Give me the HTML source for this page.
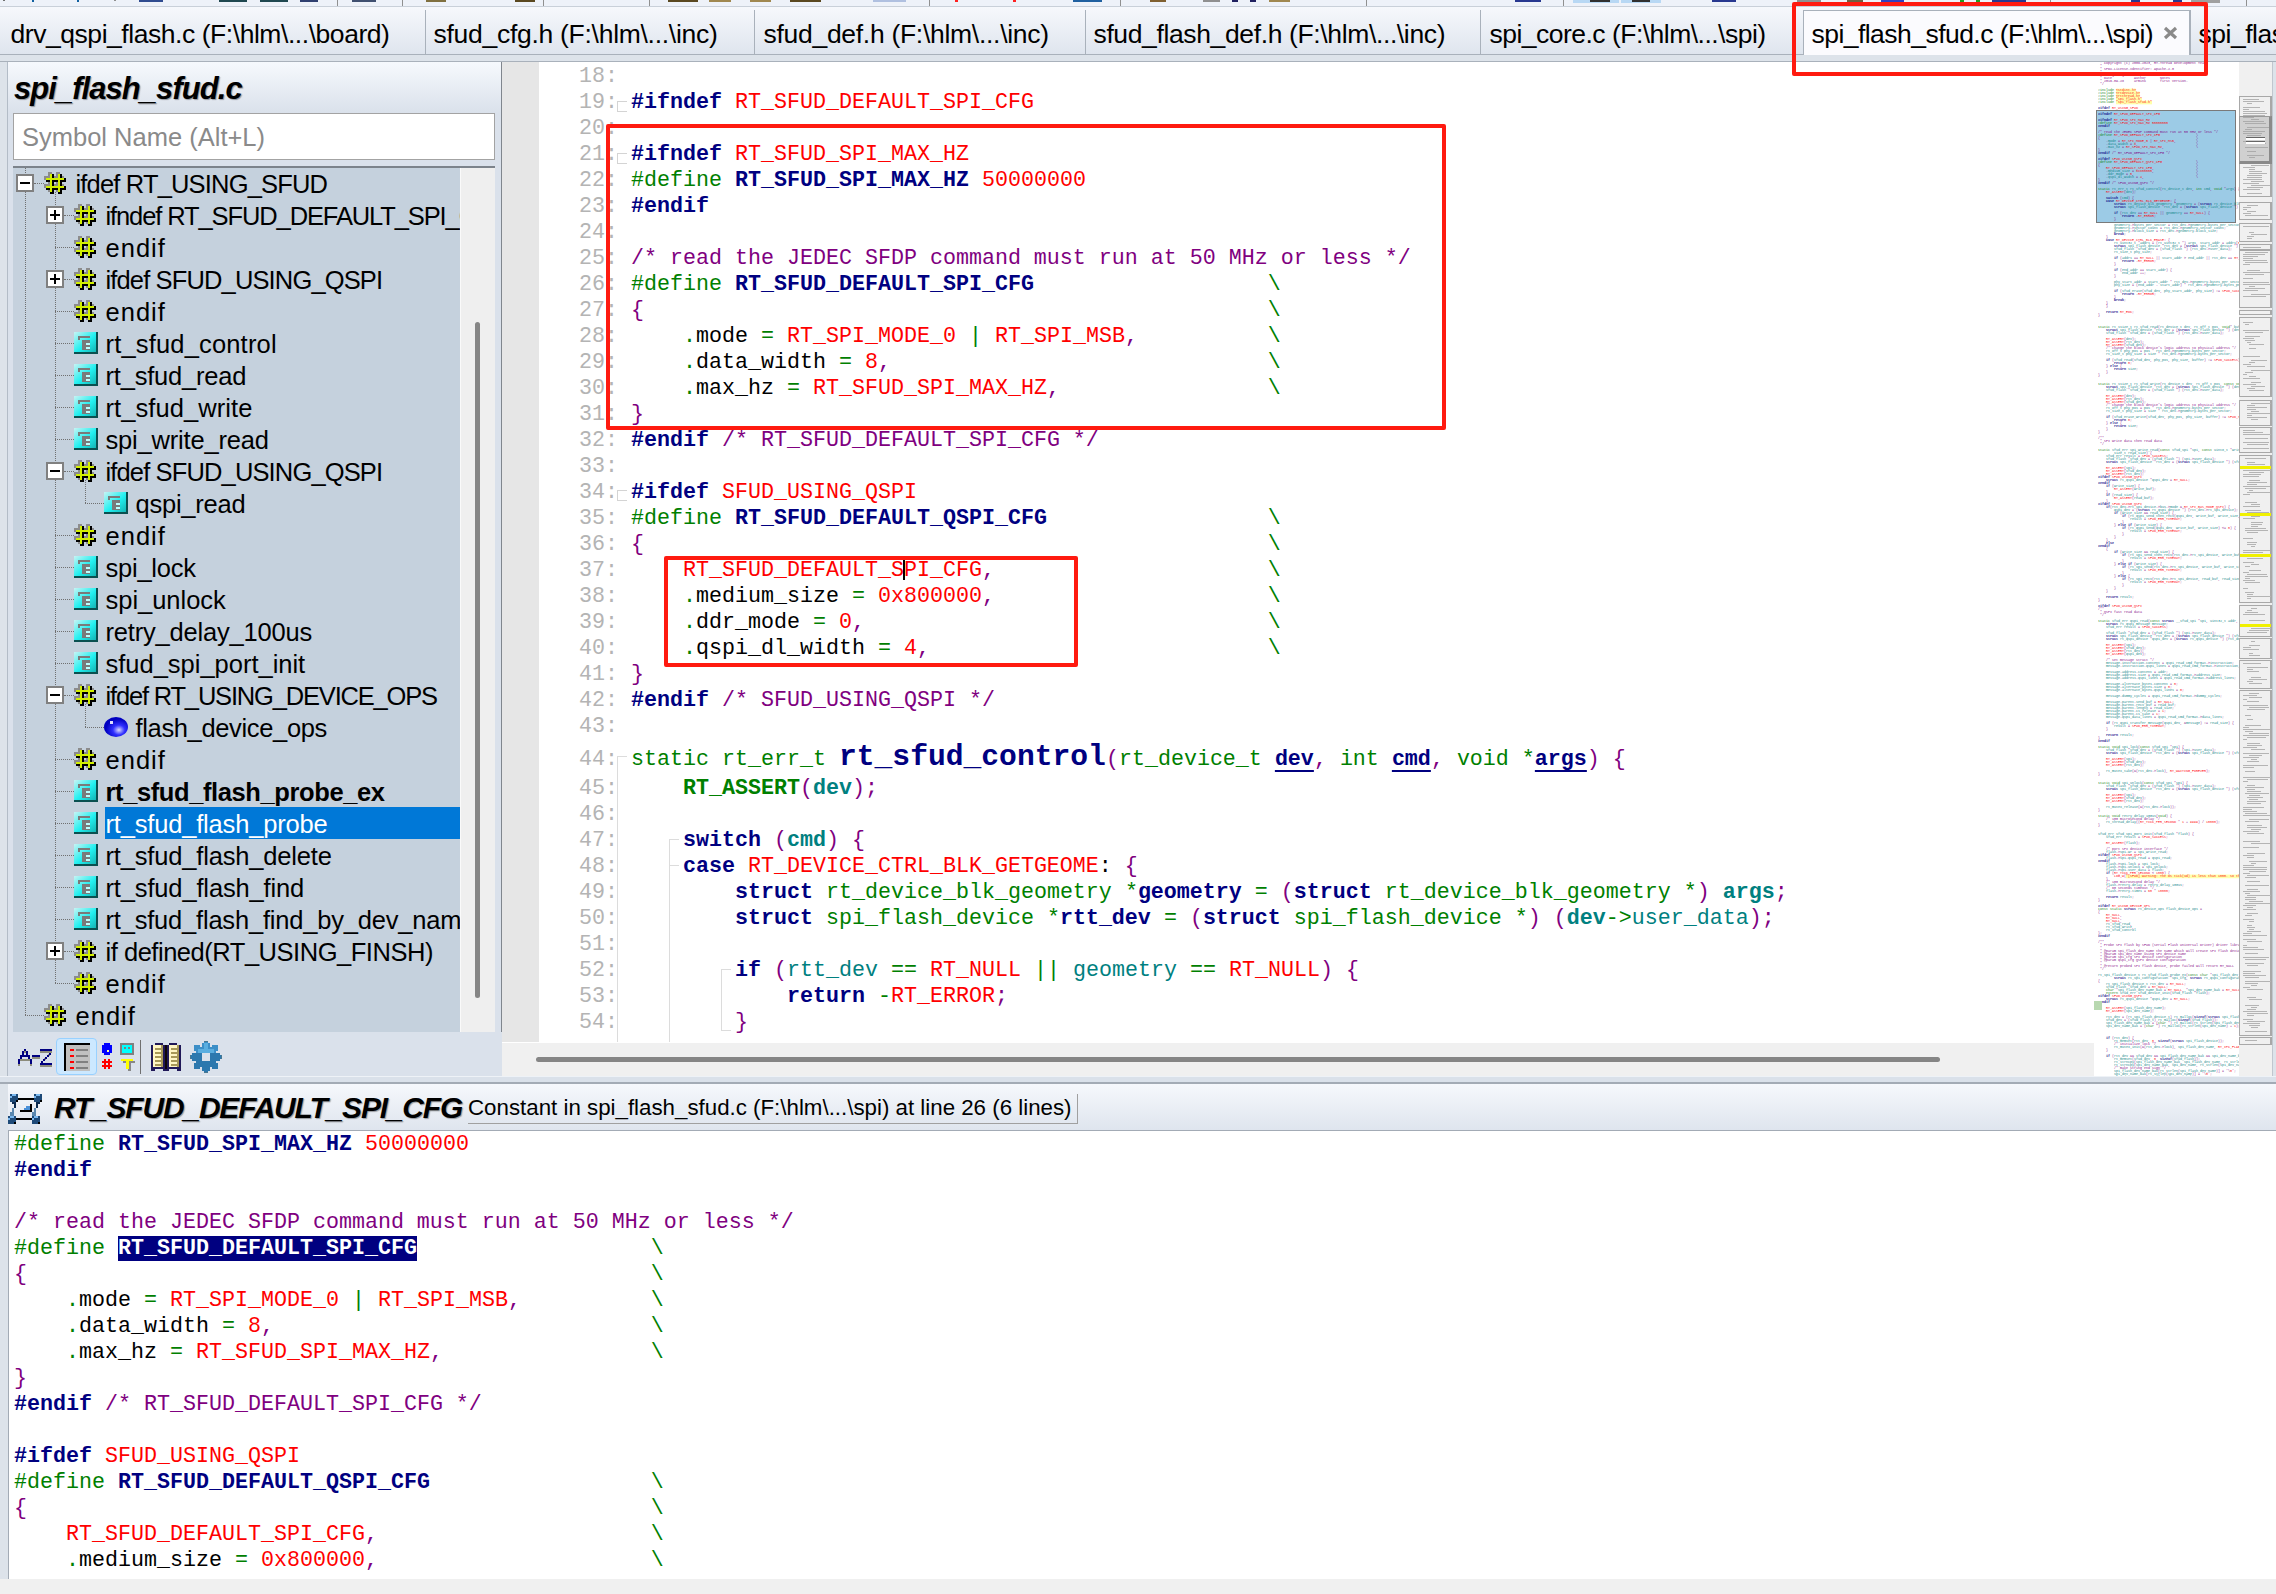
<!DOCTYPE html>
<html><head><meta charset="utf-8">
<style>
*{margin:0;padding:0;box-sizing:border-box}
html,body{width:2276px;height:1594px;overflow:hidden;background:#dde3ea;font-family:"Liberation Sans",sans-serif}
.a{position:absolute}
/* top toolbar strip */
#tb{left:0;top:0;width:2276px;height:7px;background:#eef2f9;border-bottom:1px solid #c9d0d9}
#tabbar{left:0;top:7px;width:2276px;height:48px;background:linear-gradient(#f6f8fc,#dfe5ee);border-bottom:1px solid #a9b1bb}
.tab{position:absolute;top:19px;font-size:26.5px;line-height:30px;color:#000;white-space:nowrap}
.tsep{position:absolute;top:10px;width:1px;height:44px;background:#a9b1bb}
#acttab{left:1803px;top:10px;width:387px;height:45px;background:#fbfbfe;border:1px solid #a9b1bb;border-bottom:none}
#strip{left:0;top:55px;width:2276px;height:7px;background:#dde3ea;border-bottom:1px solid #a9b1bb}
/* left panel */
#lp{left:7px;top:62px;width:495px;height:976px;background:#dae1eb;border-left:1px solid #b3bcc7;border-right:1px solid #80868e}
#lphead{left:8px;top:62px;width:493px;height:51px;background:linear-gradient(#f6f9fd,#dae1eb)}
#title{left:14px;top:71px;font-size:31px;font-weight:bold;font-style:italic;letter-spacing:-0.95px;line-height:36px;color:#000;white-space:nowrap;text-shadow:1px 1px 1px rgba(0,0,0,0.35)}
#search{left:13px;top:113px;width:482px;height:47px;background:#fff;border:1px solid #a3a3a3}
#search span{position:absolute;left:8px;top:8px;font-size:25.5px;line-height:30px;color:#8a8a8a;white-space:nowrap}
#tree{left:13px;top:166px;width:482px;height:866px;background:#c5d1dd;border-top:2px solid #7c838b;overflow:hidden}
#vtrack{left:460px;top:168px;width:35px;height:864px;background:#efefef;border-left:1px solid #fafafa}
#vthumb{left:475px;top:322px;width:5px;height:676px;background:#858585;border-radius:3px}
.tt{position:absolute;font-size:25.5px;line-height:32px;color:#000;white-space:nowrap}
.tb_{font-weight:bold}
.ts{color:#fff}
.sel{position:absolute;height:32px;background:#0078d7}
.ico{position:absolute}
.exp{position:absolute;width:18px;height:18px;background:#fff;border:2px solid #808080}
.exp .mh{position:absolute;left:2px;top:6px;width:10px;height:2px;background:#000}
.exp .mv{position:absolute;left:6px;top:2px;width:2px;height:10px;background:#000}
.hd{position:absolute;height:1px;border-top:1px dotted #707070}
.vd{position:absolute;width:1px;border-left:1px dotted #707070}
#treeclip{left:13px;top:168px;width:447px;height:864px;overflow:hidden}
/* bottom toolbar of left panel */
#ltools{left:7px;top:1032px;width:495px;height:44px;background:#dae1eb;border-left:1px solid #b3bcc7}
/* editor */
#gutter{left:502px;top:62px;width:37px;height:980px;background:#e6e6e6}
#code{left:539px;top:62px;width:1555px;height:980px;background:#fff;overflow:hidden}
.ln{position:absolute;left:579px;width:52px;font-family:"Liberation Mono",monospace;font-size:21.667px;line-height:26px;color:#b4b4b4;white-space:pre}
.cl{position:absolute;left:631px;font-family:"Liberation Mono",monospace;font-size:21.667px;line-height:26px;color:#000;white-space:pre}
.cl b{font-weight:normal}
.n{color:#000080;font-weight:bold!important}
.g{color:#008000}
.gb{color:#008000;font-weight:bold!important}
.r{color:#ff0000}
.p{color:#800080}
.t{color:#008080}
.tb{color:#008080;font-weight:bold!important}
.k{color:#000}
.u{color:#000080;font-weight:bold!important;text-decoration:underline;text-underline-offset:5px;text-decoration-thickness:1.5px}
.big{color:#000080;font-weight:bold!important;font-size:29.67px;line-height:20px}
.hl{color:#fff;background:#000080;font-weight:bold!important}
.cur{display:inline-block;width:0;height:22px;border-left:2px solid #000;vertical-align:-4px;margin-left:-1px;margin-right:-1px}
.bc{left:14px}
#hscroll{left:502px;top:1042px;width:1592px;height:34px;background:#f0f0f0;border-top:1px solid #fff}
#hthumb{left:536px;top:1057px;width:1404px;height:5px;background:#858585;border-radius:3px}
/* minimap */
#mm{left:2094px;top:62px;width:145px;height:1014px;background:#fff;overflow:hidden}
#ov{left:2239px;top:62px;width:33px;height:1014px;background:#f0f0f0;overflow:hidden}
#rstrip{left:2272px;top:62px;width:4px;height:1014px;background:#dde3ea;border-left:1px solid #c0c6ce}
/* band + bottom */
#band{left:0;top:1076px;width:2276px;height:8px;background:#dae1ea;border-top:1px solid #eef2f7;border-bottom:2px solid #a3abb5}
#bhead{left:0;top:1084px;width:2276px;height:47px;background:linear-gradient(#f6f8fc,#dfe5ee);border-bottom:1px solid #a3abb5}
#btitle{left:54px;top:1090px;font-size:30px;font-weight:bold;font-style:italic;letter-spacing:-1.2px;line-height:36px;color:#000;white-space:nowrap;text-shadow:1px 1px 1px rgba(0,0,0,0.35)}
#bdesc{left:468px;top:1094px;width:610px;height:30px;border-right:1px solid #a0a0a0;border-bottom:1px solid #a0a0a0}
#bdesc span{position:absolute;left:0;top:0px;font-size:22.3px;line-height:28px;white-space:nowrap;color:#000}
#bcode{left:8px;top:1131px;width:2268px;height:448px;background:#fff;border-left:1px solid #a3abb5}
#bleft{left:0;top:1084px;width:8px;height:495px;background:#dde3ea}
#bbot{left:0;top:1579px;width:2276px;height:15px;background:#f0f0f0}
.redbox{position:absolute;border:4px solid #ff1a10;border-radius:2px}

.mmtext{opacity:0.9;position:absolute;left:4px;top:-3px;width:600px;font-family:"Liberation Mono",monospace;font-size:10px;line-height:9px;white-space:pre;color:#000;transform:scale(0.3333);transform-origin:0 0}
.mmtext b{font-weight:normal}
.ys{background:#ffffa0}
.mmhl{position:absolute;left:2px;top:48px;width:140px;height:113px;background:#9ccbe6;border:1px solid #7a7a7a}
.ovb{position:absolute;left:0;width:33px;border:1px solid #a8a8a8;border-right-width:2px}
.ovl{position:absolute;height:1px;background:#b4b4b4}
.ovy{position:absolute;left:1px;width:31px;height:3px;background:#f0f000}
.ovthumb{position:absolute;left:0;top:54px;width:33px;height:48px;background:rgba(160,160,160,0.4);border:1px solid #9a9a9a;border-right:3px solid #8a8a8a;border-bottom:3px solid #8a8a8a}
.ovh{position:absolute;left:7px;width:19px;height:3px;background:#fff;border-top:1px solid #666}
.fbk{position:absolute;width:10px;border:1px solid #d4d4d4;border-right:none}
.fln{position:absolute;width:1px;background:#dcdcdc}
.flh{position:absolute;width:10px;height:1px;background:#dcdcdc}
</style></head><body>
<div id="tb" class="a"></div>
<div class="a" style="left:3px;top:0;width:2px;height:1px;background:#707070"></div><div class="a" style="left:114px;top:0;width:2px;height:1px;background:#909090"></div><div class="a" style="left:32px;top:0;width:2px;height:2px;background:#1060a0"></div><div class="a" style="left:77px;top:0;width:2px;height:2px;background:#1060a0"></div><div class="a" style="left:139px;top:0;width:24px;height:2px;background:#304c90"></div><div class="a" style="left:219px;top:0;width:28px;height:2px;background:#204850"></div><div class="a" style="left:260px;top:0;width:28px;height:2px;background:#204850"></div><div class="a" style="left:300px;top:0;width:18px;height:2px;background:#304070"></div><div class="a" style="left:337px;top:0;width:1px;height:6px;background:#909090"></div><div class="a" style="left:352px;top:0;width:24px;height:2px;background:#405070"></div><div class="a" style="left:402px;top:0;width:1px;height:6px;background:#909090"></div><div class="a" style="left:426px;top:0;width:20px;height:2px;background:#807040"></div><div class="a" style="left:515px;top:0;width:20px;height:2px;background:#5a4820"></div><div class="a" style="left:543px;top:0;width:1px;height:6px;background:#909090"></div><div class="a" style="left:649px;top:0;width:1px;height:6px;background:#909090"></div><div class="a" style="left:668px;top:0;width:30px;height:2px;background:#5a4820"></div><div class="a" style="left:709px;top:0;width:22px;height:2px;background:#a08850"></div><div class="a" style="left:750px;top:0;width:21px;height:2px;background:#a08850"></div><div class="a" style="left:790px;top:0;width:31px;height:2px;background:#5a4820"></div><div class="a" style="left:873px;top:0;width:33px;height:2px;background:#b0c0e0"></div><div class="a" style="left:929px;top:0;width:1px;height:6px;background:#909090"></div><div class="a" style="left:955px;top:0;width:3px;height:2px;background:#ff2020"></div><div class="a" style="left:1013px;top:0;width:3px;height:2px;background:#ff2020"></div><div class="a" style="left:1073px;top:0;width:29px;height:2px;background:#2060a0"></div><div class="a" style="left:1120px;top:0;width:1px;height:6px;background:#909090"></div><div class="a" style="left:1150px;top:0;width:16px;height:2px;background:#806030"></div><div class="a" style="left:1203px;top:0;width:17px;height:2px;background:#909090"></div><div class="a" style="left:1232px;top:0;width:6px;height:2px;background:#202060"></div><div class="a" style="left:1250px;top:0;width:6px;height:2px;background:#202060"></div><div class="a" style="left:1269px;top:0;width:21px;height:2px;background:#a08850"></div><div class="a" style="left:1366px;top:0;width:1px;height:6px;background:#909090"></div><div class="a" style="left:1515px;top:0;width:26px;height:2px;background:#283890"></div><div class="a" style="left:1563px;top:0;width:1px;height:6px;background:#909090"></div><div class="a" style="left:1573px;top:0;width:46px;height:3px;background:#b8d8f4"></div><div class="a" style="left:1621px;top:0;width:40px;height:3px;background:#b8d8f4"></div><div class="a" style="left:1590px;top:0;width:20px;height:2px;background:#303030"></div><div class="a" style="left:1632px;top:0;width:18px;height:2px;background:#303030"></div><div class="a" style="left:1712px;top:0;width:24px;height:2px;background:#283890"></div><div class="a" style="left:1797px;top:0;width:24px;height:2px;background:#909090"></div><div class="a" style="left:1847px;top:0;width:16px;height:2px;background:#706040"></div><div class="a" style="left:1881px;top:0;width:23px;height:2px;background:#3040c0"></div><div class="a" style="left:1960px;top:0;width:4px;height:2px;background:#20a020"></div><div class="a" style="left:1976px;top:0;width:4px;height:2px;background:#20a020"></div><div class="a" style="left:1992px;top:0;width:34px;height:2px;background:#283890"></div><div class="a" style="left:2050px;top:0;width:1px;height:6px;background:#909090"></div><div class="a" style="left:2131px;top:0;width:9px;height:2px;background:#283890"></div><div class="a" style="left:2173px;top:0;width:9px;height:2px;background:#283890"></div><div class="a" style="left:2191px;top:0;width:29px;height:3px;background:#a0a0a0"></div><div class="a" style="left:2246px;top:0;width:1px;height:6px;background:#909090"></div>
<div id="tabbar" class="a"></div>
<div id="acttab" class="a"></div>
<div class="tab" style="left:10.5px;letter-spacing:-0.45px">drv_qspi_flash.c (F:\hlm\...\board)</div>
<div class="tsep" style="left:425px"></div>
<div class="tab" style="left:433.5px;letter-spacing:-0.28px">sfud_cfg.h (F:\hlm\...\inc)</div>
<div class="tsep" style="left:754px"></div>
<div class="tab" style="left:763.5px;letter-spacing:-0.29px">sfud_def.h (F:\hlm\...\inc)</div>
<div class="tsep" style="left:1085px"></div>
<div class="tab" style="left:1093.5px;letter-spacing:-0.37px">sfud_flash_def.h (F:\hlm\...\inc)</div>
<div class="tsep" style="left:1480px"></div>
<div class="tab" style="left:1489.5px;letter-spacing:-0.52px">spi_core.c (F:\hlm\...\spi)</div>
<div class="tab" style="left:1811.5px;letter-spacing:-0.54px">spi_flash_sfud.c (F:\hlm\...\spi)</div>
<div class="tab" style="left:2198.5px;letter-spacing:-0.49px">spi_flash_sfud.h</div>
<svg class="a" style="left:2163px;top:26px" width="15" height="14" viewBox="0 0 15 14"><path d="M2 2L13 12M13 2L2 12" stroke="#8a8a8a" stroke-width="3.2"/></svg>
<div class="tsep" style="left:2190px"></div>
<div id="strip" class="a"></div>

<div id="lp" class="a"></div>
<div id="lphead" class="a"></div>
<div id="title" class="a">spi_flash_sfud.c</div>
<div id="search" class="a"><span>Symbol Name (Alt+L)</span></div>
<div id="tree" class="a"></div>
<div id="vtrack" class="a"></div>
<div id="vthumb" class="a"></div>
<div id="treeclip" class="a"><div style="position:absolute;left:-13px;top:-168px;width:2276px;height:1594px">
<div class="vd" style="left:25px;top:166px;height:849px"></div>
<div class="vd" style="left:55px;top:192px;height:791px"></div>
<div class="vd" style="left:85px;top:480px;height:23px"></div>
<div class="vd" style="left:85px;top:704px;height:23px"></div>
<div class="hd" style="left:34px;top:183px;width:10px"></div>
<div class="exp" style="left:16px;top:174px"><i class="mh"></i></div>
<svg class="ico" style="left:44px;top:172px" width="22" height="22" viewBox="0 0 22 22" shape-rendering="crispEdges"><g fill="#8c8c8c"><rect x="4" y="0" width="4" height="20"/><rect x="12" y="0" width="4" height="20"/><rect x="0" y="4" width="20" height="4"/><rect x="0" y="12" width="20" height="4"/></g><g fill="#000"><rect x="6" y="2" width="4" height="20"/><rect x="14" y="2" width="4" height="20"/><rect x="2" y="6" width="20" height="4"/><rect x="2" y="14" width="20" height="4"/></g><g fill="#d2f000"><rect x="6" y="2" width="2" height="18"/><rect x="14" y="2" width="2" height="18"/><rect x="2" y="6" width="18" height="2"/><rect x="2" y="14" width="18" height="2"/></g></svg>
<div class="tt" style="left:75.5px;top:168px;letter-spacing:-0.83px">ifdef RT_USING_SFUD</div>
<div class="hd" style="left:55px;top:215px;width:19px"></div>
<div class="hd" style="left:64px;top:215px;width:10px"></div>
<div class="exp" style="left:46px;top:206px"><i class="mh"></i><i class="mv"></i></div>
<svg class="ico" style="left:74px;top:204px" width="22" height="22" viewBox="0 0 22 22" shape-rendering="crispEdges"><g fill="#8c8c8c"><rect x="4" y="0" width="4" height="20"/><rect x="12" y="0" width="4" height="20"/><rect x="0" y="4" width="20" height="4"/><rect x="0" y="12" width="20" height="4"/></g><g fill="#000"><rect x="6" y="2" width="4" height="20"/><rect x="14" y="2" width="4" height="20"/><rect x="2" y="6" width="20" height="4"/><rect x="2" y="14" width="20" height="4"/></g><g fill="#d2f000"><rect x="6" y="2" width="2" height="18"/><rect x="14" y="2" width="2" height="18"/><rect x="2" y="6" width="18" height="2"/><rect x="2" y="14" width="18" height="2"/></g></svg>
<div class="tt" style="left:105.5px;top:200px;letter-spacing:-1.11px">ifndef RT_SFUD_DEFAULT_SPI_CFG</div>
<div class="hd" style="left:55px;top:247px;width:19px"></div>
<svg class="ico" style="left:74px;top:236px" width="22" height="22" viewBox="0 0 22 22" shape-rendering="crispEdges"><g fill="#8c8c8c"><rect x="4" y="0" width="4" height="20"/><rect x="12" y="0" width="4" height="20"/><rect x="0" y="4" width="20" height="4"/><rect x="0" y="12" width="20" height="4"/></g><g fill="#000"><rect x="6" y="2" width="4" height="20"/><rect x="14" y="2" width="4" height="20"/><rect x="2" y="6" width="20" height="4"/><rect x="2" y="14" width="20" height="4"/></g><g fill="#d2f000"><rect x="6" y="2" width="2" height="18"/><rect x="14" y="2" width="2" height="18"/><rect x="2" y="6" width="18" height="2"/><rect x="2" y="14" width="18" height="2"/></g></svg>
<div class="tt" style="left:105.5px;top:232px;letter-spacing:1.02px">endif</div>
<div class="hd" style="left:55px;top:279px;width:19px"></div>
<div class="hd" style="left:64px;top:279px;width:10px"></div>
<div class="exp" style="left:46px;top:270px"><i class="mh"></i><i class="mv"></i></div>
<svg class="ico" style="left:74px;top:268px" width="22" height="22" viewBox="0 0 22 22" shape-rendering="crispEdges"><g fill="#8c8c8c"><rect x="4" y="0" width="4" height="20"/><rect x="12" y="0" width="4" height="20"/><rect x="0" y="4" width="20" height="4"/><rect x="0" y="12" width="20" height="4"/></g><g fill="#000"><rect x="6" y="2" width="4" height="20"/><rect x="14" y="2" width="4" height="20"/><rect x="2" y="6" width="20" height="4"/><rect x="2" y="14" width="20" height="4"/></g><g fill="#d2f000"><rect x="6" y="2" width="2" height="18"/><rect x="14" y="2" width="2" height="18"/><rect x="2" y="6" width="18" height="2"/><rect x="2" y="14" width="18" height="2"/></g></svg>
<div class="tt" style="left:105.5px;top:264px;letter-spacing:-0.86px">ifdef SFUD_USING_QSPI</div>
<div class="hd" style="left:55px;top:311px;width:19px"></div>
<svg class="ico" style="left:74px;top:300px" width="22" height="22" viewBox="0 0 22 22" shape-rendering="crispEdges"><g fill="#8c8c8c"><rect x="4" y="0" width="4" height="20"/><rect x="12" y="0" width="4" height="20"/><rect x="0" y="4" width="20" height="4"/><rect x="0" y="12" width="20" height="4"/></g><g fill="#000"><rect x="6" y="2" width="4" height="20"/><rect x="14" y="2" width="4" height="20"/><rect x="2" y="6" width="20" height="4"/><rect x="2" y="14" width="20" height="4"/></g><g fill="#d2f000"><rect x="6" y="2" width="2" height="18"/><rect x="14" y="2" width="2" height="18"/><rect x="2" y="6" width="18" height="2"/><rect x="2" y="14" width="18" height="2"/></g></svg>
<div class="tt" style="left:105.5px;top:296px;letter-spacing:1.02px">endif</div>
<div class="hd" style="left:55px;top:343px;width:19px"></div>
<svg class="ico" style="left:74px;top:332px" width="24" height="22" viewBox="0 0 24 22"><defs><linearGradient id="fg1" x1="0" y1="0" x2="1" y2="1"><stop offset="0" stop-color="#c8f4f4"/><stop offset="0.5" stop-color="#22f0f0"/><stop offset="1" stop-color="#10a8a8"/></linearGradient></defs><rect x="0" y="0" width="24" height="22" fill="url(#fg1)"/><rect x="22" y="0" width="2" height="22" fill="#0a5050"/><rect x="0" y="20" width="24" height="2" fill="#0a5050"/><g fill="#7a7a7a"><rect x="4" y="4" width="12" height="2"/><rect x="4" y="4" width="2" height="4"/><rect x="8" y="8" width="8" height="10"/></g><g fill="#b8ffff"><rect x="12" y="11" width="4" height="2"/><rect x="12" y="15" width="4" height="2"/></g></svg>
<div class="tt" style="left:105.5px;top:328px;letter-spacing:0.17px">rt_sfud_control</div>
<div class="hd" style="left:55px;top:375px;width:19px"></div>
<svg class="ico" style="left:74px;top:364px" width="24" height="22" viewBox="0 0 24 22"><defs><linearGradient id="fg2" x1="0" y1="0" x2="1" y2="1"><stop offset="0" stop-color="#c8f4f4"/><stop offset="0.5" stop-color="#22f0f0"/><stop offset="1" stop-color="#10a8a8"/></linearGradient></defs><rect x="0" y="0" width="24" height="22" fill="url(#fg2)"/><rect x="22" y="0" width="2" height="22" fill="#0a5050"/><rect x="0" y="20" width="24" height="2" fill="#0a5050"/><g fill="#7a7a7a"><rect x="4" y="4" width="12" height="2"/><rect x="4" y="4" width="2" height="4"/><rect x="8" y="8" width="8" height="10"/></g><g fill="#b8ffff"><rect x="12" y="11" width="4" height="2"/><rect x="12" y="15" width="4" height="2"/></g></svg>
<div class="tt" style="left:105.5px;top:360px;letter-spacing:-0.21px">rt_sfud_read</div>
<div class="hd" style="left:55px;top:407px;width:19px"></div>
<svg class="ico" style="left:74px;top:396px" width="24" height="22" viewBox="0 0 24 22"><defs><linearGradient id="fg3" x1="0" y1="0" x2="1" y2="1"><stop offset="0" stop-color="#c8f4f4"/><stop offset="0.5" stop-color="#22f0f0"/><stop offset="1" stop-color="#10a8a8"/></linearGradient></defs><rect x="0" y="0" width="24" height="22" fill="url(#fg3)"/><rect x="22" y="0" width="2" height="22" fill="#0a5050"/><rect x="0" y="20" width="24" height="2" fill="#0a5050"/><g fill="#7a7a7a"><rect x="4" y="4" width="12" height="2"/><rect x="4" y="4" width="2" height="4"/><rect x="8" y="8" width="8" height="10"/></g><g fill="#b8ffff"><rect x="12" y="11" width="4" height="2"/><rect x="12" y="15" width="4" height="2"/></g></svg>
<div class="tt" style="left:105.5px;top:392px;letter-spacing:0.08px">rt_sfud_write</div>
<div class="hd" style="left:55px;top:439px;width:19px"></div>
<svg class="ico" style="left:74px;top:428px" width="24" height="22" viewBox="0 0 24 22"><defs><linearGradient id="fg4" x1="0" y1="0" x2="1" y2="1"><stop offset="0" stop-color="#c8f4f4"/><stop offset="0.5" stop-color="#22f0f0"/><stop offset="1" stop-color="#10a8a8"/></linearGradient></defs><rect x="0" y="0" width="24" height="22" fill="url(#fg4)"/><rect x="22" y="0" width="2" height="22" fill="#0a5050"/><rect x="0" y="20" width="24" height="2" fill="#0a5050"/><g fill="#7a7a7a"><rect x="4" y="4" width="12" height="2"/><rect x="4" y="4" width="2" height="4"/><rect x="8" y="8" width="8" height="10"/></g><g fill="#b8ffff"><rect x="12" y="11" width="4" height="2"/><rect x="12" y="15" width="4" height="2"/></g></svg>
<div class="tt" style="left:105.5px;top:424px;letter-spacing:-0.19px">spi_write_read</div>
<div class="hd" style="left:55px;top:471px;width:19px"></div>
<div class="hd" style="left:64px;top:471px;width:10px"></div>
<div class="exp" style="left:46px;top:462px"><i class="mh"></i></div>
<svg class="ico" style="left:74px;top:460px" width="22" height="22" viewBox="0 0 22 22" shape-rendering="crispEdges"><g fill="#8c8c8c"><rect x="4" y="0" width="4" height="20"/><rect x="12" y="0" width="4" height="20"/><rect x="0" y="4" width="20" height="4"/><rect x="0" y="12" width="20" height="4"/></g><g fill="#000"><rect x="6" y="2" width="4" height="20"/><rect x="14" y="2" width="4" height="20"/><rect x="2" y="6" width="20" height="4"/><rect x="2" y="14" width="20" height="4"/></g><g fill="#d2f000"><rect x="6" y="2" width="2" height="18"/><rect x="14" y="2" width="2" height="18"/><rect x="2" y="6" width="18" height="2"/><rect x="2" y="14" width="18" height="2"/></g></svg>
<div class="tt" style="left:105.5px;top:456px;letter-spacing:-0.86px">ifdef SFUD_USING_QSPI</div>
<div class="hd" style="left:85px;top:503px;width:19px"></div>
<svg class="ico" style="left:104px;top:492px" width="24" height="22" viewBox="0 0 24 22"><defs><linearGradient id="fg5" x1="0" y1="0" x2="1" y2="1"><stop offset="0" stop-color="#c8f4f4"/><stop offset="0.5" stop-color="#22f0f0"/><stop offset="1" stop-color="#10a8a8"/></linearGradient></defs><rect x="0" y="0" width="24" height="22" fill="url(#fg5)"/><rect x="22" y="0" width="2" height="22" fill="#0a5050"/><rect x="0" y="20" width="24" height="2" fill="#0a5050"/><g fill="#7a7a7a"><rect x="4" y="4" width="12" height="2"/><rect x="4" y="4" width="2" height="4"/><rect x="8" y="8" width="8" height="10"/></g><g fill="#b8ffff"><rect x="12" y="11" width="4" height="2"/><rect x="12" y="15" width="4" height="2"/></g></svg>
<div class="tt" style="left:135.5px;top:488px;letter-spacing:-0.24px">qspi_read</div>
<div class="hd" style="left:55px;top:535px;width:19px"></div>
<svg class="ico" style="left:74px;top:524px" width="22" height="22" viewBox="0 0 22 22" shape-rendering="crispEdges"><g fill="#8c8c8c"><rect x="4" y="0" width="4" height="20"/><rect x="12" y="0" width="4" height="20"/><rect x="0" y="4" width="20" height="4"/><rect x="0" y="12" width="20" height="4"/></g><g fill="#000"><rect x="6" y="2" width="4" height="20"/><rect x="14" y="2" width="4" height="20"/><rect x="2" y="6" width="20" height="4"/><rect x="2" y="14" width="20" height="4"/></g><g fill="#d2f000"><rect x="6" y="2" width="2" height="18"/><rect x="14" y="2" width="2" height="18"/><rect x="2" y="6" width="18" height="2"/><rect x="2" y="14" width="18" height="2"/></g></svg>
<div class="tt" style="left:105.5px;top:520px;letter-spacing:1.02px">endif</div>
<div class="hd" style="left:55px;top:567px;width:19px"></div>
<svg class="ico" style="left:74px;top:556px" width="24" height="22" viewBox="0 0 24 22"><defs><linearGradient id="fg6" x1="0" y1="0" x2="1" y2="1"><stop offset="0" stop-color="#c8f4f4"/><stop offset="0.5" stop-color="#22f0f0"/><stop offset="1" stop-color="#10a8a8"/></linearGradient></defs><rect x="0" y="0" width="24" height="22" fill="url(#fg6)"/><rect x="22" y="0" width="2" height="22" fill="#0a5050"/><rect x="0" y="20" width="24" height="2" fill="#0a5050"/><g fill="#7a7a7a"><rect x="4" y="4" width="12" height="2"/><rect x="4" y="4" width="2" height="4"/><rect x="8" y="8" width="8" height="10"/></g><g fill="#b8ffff"><rect x="12" y="11" width="4" height="2"/><rect x="12" y="15" width="4" height="2"/></g></svg>
<div class="tt" style="left:105.5px;top:552px;letter-spacing:-0.23px">spi_lock</div>
<div class="hd" style="left:55px;top:599px;width:19px"></div>
<svg class="ico" style="left:74px;top:588px" width="24" height="22" viewBox="0 0 24 22"><defs><linearGradient id="fg7" x1="0" y1="0" x2="1" y2="1"><stop offset="0" stop-color="#c8f4f4"/><stop offset="0.5" stop-color="#22f0f0"/><stop offset="1" stop-color="#10a8a8"/></linearGradient></defs><rect x="0" y="0" width="24" height="22" fill="url(#fg7)"/><rect x="22" y="0" width="2" height="22" fill="#0a5050"/><rect x="0" y="20" width="24" height="2" fill="#0a5050"/><g fill="#7a7a7a"><rect x="4" y="4" width="12" height="2"/><rect x="4" y="4" width="2" height="4"/><rect x="8" y="8" width="8" height="10"/></g><g fill="#b8ffff"><rect x="12" y="11" width="4" height="2"/><rect x="12" y="15" width="4" height="2"/></g></svg>
<div class="tt" style="left:105.5px;top:584px;letter-spacing:-0.02px">spi_unlock</div>
<div class="hd" style="left:55px;top:631px;width:19px"></div>
<svg class="ico" style="left:74px;top:620px" width="24" height="22" viewBox="0 0 24 22"><defs><linearGradient id="fg8" x1="0" y1="0" x2="1" y2="1"><stop offset="0" stop-color="#c8f4f4"/><stop offset="0.5" stop-color="#22f0f0"/><stop offset="1" stop-color="#10a8a8"/></linearGradient></defs><rect x="0" y="0" width="24" height="22" fill="url(#fg8)"/><rect x="22" y="0" width="2" height="22" fill="#0a5050"/><rect x="0" y="20" width="24" height="2" fill="#0a5050"/><g fill="#7a7a7a"><rect x="4" y="4" width="12" height="2"/><rect x="4" y="4" width="2" height="4"/><rect x="8" y="8" width="8" height="10"/></g><g fill="#b8ffff"><rect x="12" y="11" width="4" height="2"/><rect x="12" y="15" width="4" height="2"/></g></svg>
<div class="tt" style="left:105.5px;top:616px;letter-spacing:-0.19px">retry_delay_100us</div>
<div class="hd" style="left:55px;top:663px;width:19px"></div>
<svg class="ico" style="left:74px;top:652px" width="24" height="22" viewBox="0 0 24 22"><defs><linearGradient id="fg9" x1="0" y1="0" x2="1" y2="1"><stop offset="0" stop-color="#c8f4f4"/><stop offset="0.5" stop-color="#22f0f0"/><stop offset="1" stop-color="#10a8a8"/></linearGradient></defs><rect x="0" y="0" width="24" height="22" fill="url(#fg9)"/><rect x="22" y="0" width="2" height="22" fill="#0a5050"/><rect x="0" y="20" width="24" height="2" fill="#0a5050"/><g fill="#7a7a7a"><rect x="4" y="4" width="12" height="2"/><rect x="4" y="4" width="2" height="4"/><rect x="8" y="8" width="8" height="10"/></g><g fill="#b8ffff"><rect x="12" y="11" width="4" height="2"/><rect x="12" y="15" width="4" height="2"/></g></svg>
<div class="tt" style="left:105.5px;top:648px;letter-spacing:-0.01px">sfud_spi_port_init</div>
<div class="hd" style="left:55px;top:695px;width:19px"></div>
<div class="hd" style="left:64px;top:695px;width:10px"></div>
<div class="exp" style="left:46px;top:686px"><i class="mh"></i></div>
<svg class="ico" style="left:74px;top:684px" width="22" height="22" viewBox="0 0 22 22" shape-rendering="crispEdges"><g fill="#8c8c8c"><rect x="4" y="0" width="4" height="20"/><rect x="12" y="0" width="4" height="20"/><rect x="0" y="4" width="20" height="4"/><rect x="0" y="12" width="20" height="4"/></g><g fill="#000"><rect x="6" y="2" width="4" height="20"/><rect x="14" y="2" width="4" height="20"/><rect x="2" y="6" width="20" height="4"/><rect x="2" y="14" width="20" height="4"/></g><g fill="#d2f000"><rect x="6" y="2" width="2" height="18"/><rect x="14" y="2" width="2" height="18"/><rect x="2" y="6" width="18" height="2"/><rect x="2" y="14" width="18" height="2"/></g></svg>
<div class="tt" style="left:105.5px;top:680px;letter-spacing:-1.18px">ifdef RT_USING_DEVICE_OPS</div>
<div class="hd" style="left:85px;top:727px;width:19px"></div>
<svg class="ico" style="left:104px;top:717px" width="24" height="20" viewBox="0 0 24 20"><defs><radialGradient id="bg1" cx="0.62" cy="0.65" r="0.55"><stop offset="0" stop-color="#d8d8ff"/><stop offset="0.45" stop-color="#3030ff"/><stop offset="1" stop-color="#0000c0"/></radialGradient></defs><ellipse cx="12" cy="10" rx="12" ry="10" fill="url(#bg1)"/><rect x="6" y="4" width="3" height="3" fill="#e0e0ff"/></svg>
<div class="tt" style="left:135.5px;top:712px;letter-spacing:-0.35px">flash_device_ops</div>
<div class="hd" style="left:55px;top:759px;width:19px"></div>
<svg class="ico" style="left:74px;top:748px" width="22" height="22" viewBox="0 0 22 22" shape-rendering="crispEdges"><g fill="#8c8c8c"><rect x="4" y="0" width="4" height="20"/><rect x="12" y="0" width="4" height="20"/><rect x="0" y="4" width="20" height="4"/><rect x="0" y="12" width="20" height="4"/></g><g fill="#000"><rect x="6" y="2" width="4" height="20"/><rect x="14" y="2" width="4" height="20"/><rect x="2" y="6" width="20" height="4"/><rect x="2" y="14" width="20" height="4"/></g><g fill="#d2f000"><rect x="6" y="2" width="2" height="18"/><rect x="14" y="2" width="2" height="18"/><rect x="2" y="6" width="18" height="2"/><rect x="2" y="14" width="18" height="2"/></g></svg>
<div class="tt" style="left:105.5px;top:744px;letter-spacing:1.02px">endif</div>
<div class="hd" style="left:55px;top:791px;width:19px"></div>
<svg class="ico" style="left:74px;top:780px" width="24" height="22" viewBox="0 0 24 22"><defs><linearGradient id="fg10" x1="0" y1="0" x2="1" y2="1"><stop offset="0" stop-color="#c8f4f4"/><stop offset="0.5" stop-color="#22f0f0"/><stop offset="1" stop-color="#10a8a8"/></linearGradient></defs><rect x="0" y="0" width="24" height="22" fill="url(#fg10)"/><rect x="22" y="0" width="2" height="22" fill="#0a5050"/><rect x="0" y="20" width="24" height="2" fill="#0a5050"/><g fill="#7a7a7a"><rect x="4" y="4" width="12" height="2"/><rect x="4" y="4" width="2" height="4"/><rect x="8" y="8" width="8" height="10"/></g><g fill="#b8ffff"><rect x="12" y="11" width="4" height="2"/><rect x="12" y="15" width="4" height="2"/></g></svg>
<div class="tt tb_" style="left:105.5px;top:776px;letter-spacing:-0.39px">rt_sfud_flash_probe_ex</div>
<div class="sel" style="left:105px;top:807px;width:355px"></div>
<div class="hd" style="left:55px;top:823px;width:19px"></div>
<svg class="ico" style="left:74px;top:812px" width="24" height="22" viewBox="0 0 24 22"><defs><linearGradient id="fg11" x1="0" y1="0" x2="1" y2="1"><stop offset="0" stop-color="#c8f4f4"/><stop offset="0.5" stop-color="#22f0f0"/><stop offset="1" stop-color="#10a8a8"/></linearGradient></defs><rect x="0" y="0" width="24" height="22" fill="url(#fg11)"/><rect x="22" y="0" width="2" height="22" fill="#0a5050"/><rect x="0" y="20" width="24" height="2" fill="#0a5050"/><g fill="#7a7a7a"><rect x="4" y="4" width="12" height="2"/><rect x="4" y="4" width="2" height="4"/><rect x="8" y="8" width="8" height="10"/></g><g fill="#b8ffff"><rect x="12" y="11" width="4" height="2"/><rect x="12" y="15" width="4" height="2"/></g></svg>
<div class="tt ts" style="left:105.5px;top:808px;letter-spacing:-0.18px">rt_sfud_flash_probe</div>
<div class="hd" style="left:55px;top:855px;width:19px"></div>
<svg class="ico" style="left:74px;top:844px" width="24" height="22" viewBox="0 0 24 22"><defs><linearGradient id="fg12" x1="0" y1="0" x2="1" y2="1"><stop offset="0" stop-color="#c8f4f4"/><stop offset="0.5" stop-color="#22f0f0"/><stop offset="1" stop-color="#10a8a8"/></linearGradient></defs><rect x="0" y="0" width="24" height="22" fill="url(#fg12)"/><rect x="22" y="0" width="2" height="22" fill="#0a5050"/><rect x="0" y="20" width="24" height="2" fill="#0a5050"/><g fill="#7a7a7a"><rect x="4" y="4" width="12" height="2"/><rect x="4" y="4" width="2" height="4"/><rect x="8" y="8" width="8" height="10"/></g><g fill="#b8ffff"><rect x="12" y="11" width="4" height="2"/><rect x="12" y="15" width="4" height="2"/></g></svg>
<div class="tt" style="left:105.5px;top:840px;letter-spacing:-0.17px">rt_sfud_flash_delete</div>
<div class="hd" style="left:55px;top:887px;width:19px"></div>
<svg class="ico" style="left:74px;top:876px" width="24" height="22" viewBox="0 0 24 22"><defs><linearGradient id="fg13" x1="0" y1="0" x2="1" y2="1"><stop offset="0" stop-color="#c8f4f4"/><stop offset="0.5" stop-color="#22f0f0"/><stop offset="1" stop-color="#10a8a8"/></linearGradient></defs><rect x="0" y="0" width="24" height="22" fill="url(#fg13)"/><rect x="22" y="0" width="2" height="22" fill="#0a5050"/><rect x="0" y="20" width="24" height="2" fill="#0a5050"/><g fill="#7a7a7a"><rect x="4" y="4" width="12" height="2"/><rect x="4" y="4" width="2" height="4"/><rect x="8" y="8" width="8" height="10"/></g><g fill="#b8ffff"><rect x="12" y="11" width="4" height="2"/><rect x="12" y="15" width="4" height="2"/></g></svg>
<div class="tt" style="left:105.5px;top:872px;letter-spacing:-0.15px">rt_sfud_flash_find</div>
<div class="hd" style="left:55px;top:919px;width:19px"></div>
<svg class="ico" style="left:74px;top:908px" width="24" height="22" viewBox="0 0 24 22"><defs><linearGradient id="fg14" x1="0" y1="0" x2="1" y2="1"><stop offset="0" stop-color="#c8f4f4"/><stop offset="0.5" stop-color="#22f0f0"/><stop offset="1" stop-color="#10a8a8"/></linearGradient></defs><rect x="0" y="0" width="24" height="22" fill="url(#fg14)"/><rect x="22" y="0" width="2" height="22" fill="#0a5050"/><rect x="0" y="20" width="24" height="2" fill="#0a5050"/><g fill="#7a7a7a"><rect x="4" y="4" width="12" height="2"/><rect x="4" y="4" width="2" height="4"/><rect x="8" y="8" width="8" height="10"/></g><g fill="#b8ffff"><rect x="12" y="11" width="4" height="2"/><rect x="12" y="15" width="4" height="2"/></g></svg>
<div class="tt" style="left:105.5px;top:904px;letter-spacing:-0.20px">rt_sfud_flash_find_by_dev_name</div>
<div class="hd" style="left:55px;top:951px;width:19px"></div>
<div class="hd" style="left:64px;top:951px;width:10px"></div>
<div class="exp" style="left:46px;top:942px"><i class="mh"></i><i class="mv"></i></div>
<svg class="ico" style="left:74px;top:940px" width="22" height="22" viewBox="0 0 22 22" shape-rendering="crispEdges"><g fill="#8c8c8c"><rect x="4" y="0" width="4" height="20"/><rect x="12" y="0" width="4" height="20"/><rect x="0" y="4" width="20" height="4"/><rect x="0" y="12" width="20" height="4"/></g><g fill="#000"><rect x="6" y="2" width="4" height="20"/><rect x="14" y="2" width="4" height="20"/><rect x="2" y="6" width="20" height="4"/><rect x="2" y="14" width="20" height="4"/></g><g fill="#d2f000"><rect x="6" y="2" width="2" height="18"/><rect x="14" y="2" width="2" height="18"/><rect x="2" y="6" width="18" height="2"/><rect x="2" y="14" width="18" height="2"/></g></svg>
<div class="tt" style="left:105.5px;top:936px;letter-spacing:-0.47px">if defined(RT_USING_FINSH)</div>
<div class="hd" style="left:55px;top:983px;width:19px"></div>
<svg class="ico" style="left:74px;top:972px" width="22" height="22" viewBox="0 0 22 22" shape-rendering="crispEdges"><g fill="#8c8c8c"><rect x="4" y="0" width="4" height="20"/><rect x="12" y="0" width="4" height="20"/><rect x="0" y="4" width="20" height="4"/><rect x="0" y="12" width="20" height="4"/></g><g fill="#000"><rect x="6" y="2" width="4" height="20"/><rect x="14" y="2" width="4" height="20"/><rect x="2" y="6" width="20" height="4"/><rect x="2" y="14" width="20" height="4"/></g><g fill="#d2f000"><rect x="6" y="2" width="2" height="18"/><rect x="14" y="2" width="2" height="18"/><rect x="2" y="6" width="18" height="2"/><rect x="2" y="14" width="18" height="2"/></g></svg>
<div class="tt" style="left:105.5px;top:968px;letter-spacing:1.02px">endif</div>
<div class="hd" style="left:25px;top:1015px;width:19px"></div>
<svg class="ico" style="left:44px;top:1004px" width="22" height="22" viewBox="0 0 22 22" shape-rendering="crispEdges"><g fill="#8c8c8c"><rect x="4" y="0" width="4" height="20"/><rect x="12" y="0" width="4" height="20"/><rect x="0" y="4" width="20" height="4"/><rect x="0" y="12" width="20" height="4"/></g><g fill="#000"><rect x="6" y="2" width="4" height="20"/><rect x="14" y="2" width="4" height="20"/><rect x="2" y="6" width="20" height="4"/><rect x="2" y="14" width="20" height="4"/></g><g fill="#d2f000"><rect x="6" y="2" width="2" height="18"/><rect x="14" y="2" width="2" height="18"/><rect x="2" y="6" width="18" height="2"/><rect x="2" y="14" width="18" height="2"/></g></svg>
<div class="tt" style="left:75.5px;top:1000px;letter-spacing:1.02px">endif</div>
</div></div>
<div id="ltools" class="a"></div>

<div id="gutter" class="a"></div>
<div id="code" class="a"></div>
<div class="a" style="left:0;top:0;width:2094px;height:1042px;overflow:hidden">
<div class="fbk" style="left:617px;top:101px;height:11px"></div>
<div class="fbk" style="left:617px;top:153px;height:11px"></div>
<div class="fbk" style="left:617px;top:490px;height:11px"></div>
<div class="fln" style="left:617px;top:756px;height:286px"></div><div class="flh" style="left:617px;top:756px"></div>
<div class="fln" style="left:669px;top:839px;height:203px"></div><div class="flh" style="left:669px;top:839px"></div><div class="flh" style="left:669px;top:865px"></div>
<div class="fln" style="left:721px;top:969px;height:62px"></div><div class="flh" style="left:721px;top:969px"></div><div class="flh" style="left:721px;top:1030px"></div>
<div class="ln" style="top:64px">18:</div>
<div class="cl" style="top:64px"></div>
<div class="ln" style="top:90px">19:</div>
<div class="cl" style="top:90px"><b class="n">#ifndef</b> <b class="r">RT_SFUD_DEFAULT_SPI_CFG</b></div>
<div class="ln" style="top:116px">20:</div>
<div class="cl" style="top:116px"></div>
<div class="ln" style="top:142px">21:</div>
<div class="cl" style="top:142px"><b class="n">#ifndef</b> <b class="r">RT_SFUD_SPI_MAX_HZ</b></div>
<div class="ln" style="top:168px">22:</div>
<div class="cl" style="top:168px"><b class="g">#define</b> <b class="n">RT_SFUD_SPI_MAX_HZ</b> <b class="r">50000000</b></div>
<div class="ln" style="top:194px">23:</div>
<div class="cl" style="top:194px"><b class="n">#endif</b></div>
<div class="ln" style="top:220px">24:</div>
<div class="cl" style="top:220px"></div>
<div class="ln" style="top:246px">25:</div>
<div class="cl" style="top:246px"><b class="p">/* read the JEDEC SFDP command must run at 50 MHz or less */</b></div>
<div class="ln" style="top:272px">26:</div>
<div class="cl" style="top:272px"><b class="g">#define</b> <b class="n">RT_SFUD_DEFAULT_SPI_CFG</b>                  <b class="g">\</b></div>
<div class="ln" style="top:298px">27:</div>
<div class="cl" style="top:298px"><b class="p">{</b>                                                <b class="g">\</b></div>
<div class="ln" style="top:324px">28:</div>
<div class="cl" style="top:324px">    <b class="g">.</b><b class="k">mode</b> <b class="g">=</b> <b class="r">RT_SPI_MODE_0</b> <b class="g">|</b> <b class="r">RT_SPI_MSB</b><b class="p">,</b>          <b class="g">\</b></div>
<div class="ln" style="top:350px">29:</div>
<div class="cl" style="top:350px">    <b class="g">.</b><b class="k">data_width</b> <b class="g">=</b> <b class="r">8</b><b class="p">,</b>                             <b class="g">\</b></div>
<div class="ln" style="top:376px">30:</div>
<div class="cl" style="top:376px">    <b class="g">.</b><b class="k">max_hz</b> <b class="g">=</b> <b class="r">RT_SFUD_SPI_MAX_HZ</b><b class="p">,</b>                <b class="g">\</b></div>
<div class="ln" style="top:402px">31:</div>
<div class="cl" style="top:402px"><b class="p">}</b></div>
<div class="ln" style="top:428px">32:</div>
<div class="cl" style="top:428px"><b class="n">#endif</b> <b class="p">/* RT_SFUD_DEFAULT_SPI_CFG */</b></div>
<div class="ln" style="top:454px">33:</div>
<div class="cl" style="top:454px"></div>
<div class="ln" style="top:480px">34:</div>
<div class="cl" style="top:480px"><b class="n">#ifdef</b> <b class="r">SFUD_USING_QSPI</b></div>
<div class="ln" style="top:506px">35:</div>
<div class="cl" style="top:506px"><b class="g">#define</b> <b class="n">RT_SFUD_DEFAULT_QSPI_CFG</b>                 <b class="g">\</b></div>
<div class="ln" style="top:532px">36:</div>
<div class="cl" style="top:532px"><b class="p">{</b>                                                <b class="g">\</b></div>
<div class="ln" style="top:558px">37:</div>
<div class="cl" style="top:558px">    <b class="r">RT_SFUD_DEFAULT_S</b><i class="cur"></i><b class="r">PI_CFG</b><b class="p">,</b>                     <b class="g">\</b></div>
<div class="ln" style="top:584px">38:</div>
<div class="cl" style="top:584px">    <b class="g">.</b><b class="k">medium_size</b> <b class="g">=</b> <b class="r">0x800000</b><b class="p">,</b>                     <b class="g">\</b></div>
<div class="ln" style="top:610px">39:</div>
<div class="cl" style="top:610px">    <b class="g">.</b><b class="k">ddr_mode</b> <b class="g">=</b> <b class="r">0</b><b class="p">,</b>                               <b class="g">\</b></div>
<div class="ln" style="top:636px">40:</div>
<div class="cl" style="top:636px">    <b class="g">.</b><b class="k">qspi_dl_width</b> <b class="g">=</b> <b class="r">4</b><b class="p">,</b>                          <b class="g">\</b></div>
<div class="ln" style="top:662px">41:</div>
<div class="cl" style="top:662px"><b class="p">}</b></div>
<div class="ln" style="top:688px">42:</div>
<div class="cl" style="top:688px"><b class="n">#endif</b> <b class="p">/* SFUD_USING_QSPI */</b></div>
<div class="ln" style="top:714px">43:</div>
<div class="cl" style="top:714px"></div>
<div class="ln" style="top:747px">44:</div>
<div class="cl" style="top:747px"><b class="g">static</b> <b class="g">rt_err_t</b> <b class="big">rt_sfud_control</b><b class="p">(</b><b class="g">rt_device_t</b> <b class="u">dev</b><b class="p">,</b> <b class="g">int</b> <b class="u">cmd</b><b class="p">,</b> <b class="g">void</b> <b class="g">*</b><b class="u">args</b><b class="p">)</b> <b class="p">{</b></div>
<div class="ln" style="top:776px">45:</div>
<div class="cl" style="top:776px">    <b class="gb">RT_ASSERT</b><b class="p">(</b><b class="tb">dev</b><b class="p">);</b></div>
<div class="ln" style="top:802px">46:</div>
<div class="cl" style="top:802px"></div>
<div class="ln" style="top:828px">47:</div>
<div class="cl" style="top:828px">    <b class="n">switch</b> <b class="p">(</b><b class="tb">cmd</b><b class="p">)</b> <b class="p">{</b></div>
<div class="ln" style="top:854px">48:</div>
<div class="cl" style="top:854px">    <b class="n">case</b> <b class="r">RT_DEVICE_CTRL_BLK_GETGEOME</b><b class="k">:</b> <b class="p">{</b></div>
<div class="ln" style="top:880px">49:</div>
<div class="cl" style="top:880px">        <b class="n">struct</b> <b class="g">rt_device_blk_geometry</b> <b class="g">*</b><b class="n">geometry</b> <b class="g">=</b> <b class="p">(</b><b class="n">struct</b> <b class="g">rt_device_blk_geometry</b> <b class="g">*</b><b class="p">)</b> <b class="tb">args</b><b class="p">;</b></div>
<div class="ln" style="top:906px">50:</div>
<div class="cl" style="top:906px">        <b class="n">struct</b> <b class="g">spi_flash_device</b> <b class="g">*</b><b class="n">rtt_dev</b> <b class="g">=</b> <b class="p">(</b><b class="n">struct</b> <b class="g">spi_flash_device</b> <b class="g">*</b><b class="p">)</b> <b class="p">(</b><b class="tb">dev</b><b class="g">-&gt;</b><b class="t">user_data</b><b class="p">);</b></div>
<div class="ln" style="top:932px">51:</div>
<div class="cl" style="top:932px"></div>
<div class="ln" style="top:958px">52:</div>
<div class="cl" style="top:958px">        <b class="n">if</b> <b class="p">(</b><b class="t">rtt_dev</b> <b class="g">==</b> <b class="r">RT_NULL</b> <b class="g">||</b> <b class="t">geometry</b> <b class="g">==</b> <b class="r">RT_NULL</b><b class="p">)</b> <b class="p">{</b></div>
<div class="ln" style="top:984px">53:</div>
<div class="cl" style="top:984px">            <b class="n">return</b> <b class="g">-</b><b class="r">RT_ERROR</b><b class="p">;</b></div>
<div class="ln" style="top:1010px">54:</div>
<div class="cl" style="top:1010px">        <b class="p">}</b></div>
</div>
<div id="hscroll" class="a"></div>
<div id="hthumb" class="a"></div>

<div id="mm" class="a"><div class="mmhl"></div><div class="mmtext"><b class="p">/*</b>
<b class="p"> * Copyright (c) 2006-2023, RT-Thread Development Team</b>
<b class="p"> *</b>
<b class="p"> * SPDX-License-Identifier: Apache-2.0</b>
<b class="p"> *</b>
<b class="p"> * Change Logs:</b>
<b class="p"> * Date           Author       Notes</b>
<b class="p"> * 2016-09-28     armink       first version.</b>
<b class="p"> */</b>

<b class="g">#include</b> <b class="r ys">&lt;stdint.h&gt;</b>
<b class="g">#include</b> <b class="r ys">&lt;rtdevice.h&gt;</b>
<b class="g">#include</b> <b class="r ys">&lt;rtthread.h&gt;</b>
<b class="g">#include</b> <b class="r ys">"spi_flash.h"</b>
<b class="g">#include</b> <b class="r ys">"spi_flash_sfud.h"</b>

<b class="n">#ifdef</b> <b class="r">RT_USING_SFUD</b>

<b class="n">#ifndef</b> <b class="r">RT_SFUD_DEFAULT_SPI_CFG</b>

<b class="n">#ifndef</b> <b class="r">RT_SFUD_SPI_MAX_HZ</b>
<b class="g">#define</b> <b class="r">RT_SFUD_SPI_MAX_HZ</b> <b class="r">50000000</b>
<b class="n">#endif</b>

<b class="p">/* read the JEDEC SFDP command must run at 50 MHz or less */</b>
<b class="g">#define</b> <b class="r">RT_SFUD_DEFAULT_SPI_CFG</b>                  <b class="p">\</b>
<b class="p">{</b>                                                <b class="p">\</b>
    <b class="p">.</b><b class="t">mode</b> <b class="p">=</b> <b class="r">RT_SPI_MODE_0</b> <b class="p">|</b> <b class="r">RT_SPI_MSB</b><b class="p">,</b>          <b class="p">\</b>
    <b class="p">.</b><b class="t">data_width</b> <b class="p">=</b> <b class="r">8</b><b class="p">,</b>                             <b class="p">\</b>
    <b class="p">.</b><b class="t">max_hz</b> <b class="p">=</b> <b class="r">RT_SFUD_SPI_MAX_HZ</b><b class="p">,</b>                <b class="p">\</b>
<b class="p">}</b>
<b class="n">#endif</b> <b class="p">/* RT_SFUD_DEFAULT_SPI_CFG */</b>

<b class="n">#ifdef</b> <b class="r">SFUD_USING_QSPI</b>
<b class="g">#define</b> <b class="r">RT_SFUD_DEFAULT_QSPI_CFG</b>                 <b class="p">\</b>
<b class="p">{</b>                                                <b class="p">\</b>
    <b class="r">RT_SFUD_DEFAULT_SPI_CFG</b><b class="p">,</b>                     <b class="p">\</b>
    <b class="p">.</b><b class="t">medium_size</b> <b class="p">=</b> <b class="r">0x800000</b><b class="p">,</b>                     <b class="p">\</b>
    <b class="p">.</b><b class="t">ddr_mode</b> <b class="p">=</b> <b class="r">0</b><b class="p">,</b>                               <b class="p">\</b>
    <b class="p">.</b><b class="t">qspi_dl_width</b> <b class="p">=</b> <b class="r">4</b><b class="p">,</b>                          <b class="p">\</b>
<b class="p">}</b>
<b class="n">#endif</b> <b class="p">/* SFUD_USING_QSPI */</b>

<b class="g">static</b> <b class="t">rt_err_t</b> <b class="t">rt_sfud_control</b><b class="p">(</b><b class="t">rt_device_t</b> <b class="t">dev</b><b class="p">,</b> <b class="g">int</b> <b class="t">cmd</b><b class="p">,</b> <b class="g">void</b> <b class="p">*</b><b class="t">args</b><b class="p">)</b> <b class="p">{</b>
    <b class="r">RT_ASSERT</b><b class="p">(</b><b class="t">dev</b><b class="p">)</b><b class="p">;</b>

    <b class="n">switch</b> <b class="p">(</b><b class="t">cmd</b><b class="p">)</b> <b class="p">{</b>
    <b class="n">case</b> <b class="r">RT_DEVICE_CTRL_BLK_GETGEOME</b><b class="p">:</b> <b class="p">{</b>
        <b class="n">struct</b> <b class="t">rt_device_blk_geometry</b> <b class="p">*</b><b class="t">geometry</b> <b class="p">=</b> <b class="p">(</b><b class="n">struct</b> <b class="t">rt_device_blk_geometry</b> <b class="p">*</b><b class="p">)</b> <b class="t">args</b><b class="p">;</b>
        <b class="n">struct</b> <b class="t">spi_flash_device</b> <b class="p">*</b><b class="t">rtt_dev</b> <b class="p">=</b> <b class="p">(</b><b class="n">struct</b> <b class="t">spi_flash_device</b> <b class="p">*</b><b class="p">)</b> <b class="p">(</b><b class="t">dev</b><b class="p">-</b><b class="p">&gt;</b><b class="t">user_data</b><b class="p">)</b><b class="p">;</b>

        <b class="n">if</b> <b class="p">(</b><b class="t">rtt_dev</b> <b class="p">=</b><b class="p">=</b> <b class="r">RT_NULL</b> <b class="p">|</b><b class="p">|</b> <b class="t">geometry</b> <b class="p">=</b><b class="p">=</b> <b class="r">RT_NULL</b><b class="p">)</b> <b class="p">{</b>
            <b class="n">return</b> <b class="p">-</b><b class="r">RT_ERROR</b><b class="p">;</b>
        <b class="p">}</b>

        <b class="t">geometry</b><b class="p">-</b><b class="p">&gt;</b><b class="t">bytes_per_sector</b> <b class="p">=</b> <b class="t">rtt_dev</b><b class="p">-</b><b class="p">&gt;</b><b class="t">geometry</b><b class="p">.</b><b class="t">bytes_per_sector</b><b class="p">;</b>
        <b class="t">geometry</b><b class="p">-</b><b class="p">&gt;</b><b class="t">sector_count</b> <b class="p">=</b> <b class="t">rtt_dev</b><b class="p">-</b><b class="p">&gt;</b><b class="t">geometry</b><b class="p">.</b><b class="t">sector_count</b><b class="p">;</b>
        <b class="t">geometry</b><b class="p">-</b><b class="p">&gt;</b><b class="t">block_size</b> <b class="p">=</b> <b class="t">rtt_dev</b><b class="p">-</b><b class="p">&gt;</b><b class="t">geometry</b><b class="p">.</b><b class="t">block_size</b><b class="p">;</b>
        <b class="n">break</b><b class="p">;</b>
    <b class="p">}</b>
    <b class="n">case</b> <b class="r">RT_DEVICE_CTRL_BLK_ERASE</b><b class="p">:</b> <b class="p">{</b>
        <b class="t">rt_uint32_t</b> <b class="p">*</b><b class="t">addrs</b> <b class="p">=</b> <b class="p">(</b><b class="t">rt_uint32_t</b> <b class="p">*</b><b class="p">)</b> <b class="t">args</b><b class="p">,</b> <b class="t">start_addr</b> <b class="p">=</b> <b class="t">addrs</b><b class="p">[</b><b class="r">0</b><b class="p">]</b><b class="p">,</b> <b class="t">end_addr</b> <b class="p">=</b> <b class="t">addrs</b><b class="p">[</b><b class="r">1</b><b class="p">]</b><b class="p">,</b> <b class="t">phy_start_addr</b><b class="p">;</b>
        <b class="n">struct</b> <b class="t">spi_flash_device</b> <b class="p">*</b><b class="t">rtt_dev</b> <b class="p">=</b> <b class="p">(</b><b class="n">struct</b> <b class="t">spi_flash_device</b> <b class="p">*</b><b class="p">)</b> <b class="p">(</b><b class="t">dev</b><b class="p">-</b><b class="p">&gt;</b><b class="t">user_data</b><b class="p">)</b><b class="p">;</b>
        <b class="t">sfud_flash</b> <b class="p">*</b><b class="t">sfud_dev</b> <b class="p">=</b> <b class="p">(</b><b class="t">sfud_flash</b> <b class="p">*</b><b class="p">)</b> <b class="p">(</b><b class="t">rtt_dev</b><b class="p">-</b><b class="p">&gt;</b><b class="t">user_data</b><b class="p">)</b><b class="p">;</b>
        <b class="t">rt_size_t</b> <b class="t">phy_size</b><b class="p">;</b>

        <b class="n">if</b> <b class="p">(</b><b class="t">addrs</b> <b class="p">=</b><b class="p">=</b> <b class="r">RT_NULL</b> <b class="p">|</b><b class="p">|</b> <b class="t">start_addr</b> <b class="p">&gt;</b> <b class="t">end_addr</b> <b class="p">|</b><b class="p">|</b> <b class="t">rtt_dev</b> <b class="p">=</b><b class="p">=</b> <b class="r">RT_NULL</b> <b class="p">|</b><b class="p">|</b> <b class="t">sfud_dev</b> <b class="p">=</b><b class="p">=</b> <b class="r">RT_NULL</b><b class="p">)</b> <b class="p">{</b>
            <b class="n">return</b> <b class="p">-</b><b class="r">RT_ERROR</b><b class="p">;</b>
        <b class="p">}</b>

        <b class="n">if</b> <b class="p">(</b><b class="t">end_addr</b> <b class="p">=</b><b class="p">=</b> <b class="t">start_addr</b><b class="p">)</b> <b class="p">{</b>
            <b class="t">end_addr</b> <b class="p">+</b><b class="p">+</b><b class="p">;</b>
        <b class="p">}</b>

        <b class="t">phy_start_addr</b> <b class="p">=</b> <b class="t">start_addr</b> <b class="p">*</b> <b class="t">rtt_dev</b><b class="p">-</b><b class="p">&gt;</b><b class="t">geometry</b><b class="p">.</b><b class="t">bytes_per_sector</b><b class="p">;</b>
        <b class="t">phy_size</b> <b class="p">=</b> <b class="p">(</b><b class="t">end_addr</b> <b class="p">-</b> <b class="t">start_addr</b><b class="p">)</b> <b class="p">*</b> <b class="t">rtt_dev</b><b class="p">-</b><b class="p">&gt;</b><b class="t">geometry</b><b class="p">.</b><b class="t">bytes_per_sector</b><b class="p">;</b>

        <b class="n">if</b> <b class="p">(</b><b class="t">sfud_erase</b><b class="p">(</b><b class="t">sfud_dev</b><b class="p">,</b> <b class="t">phy_start_addr</b><b class="p">,</b> <b class="t">phy_size</b><b class="p">)</b> <b class="p">!</b><b class="p">=</b> <b class="r">SFUD_SUCCESS</b><b class="p">)</b> <b class="p">{</b>
            <b class="n">return</b> <b class="p">-</b><b class="r">RT_ERROR</b><b class="p">;</b>
        <b class="p">}</b>
        <b class="n">break</b><b class="p">;</b>
    <b class="p">}</b>
    <b class="p">}</b>

    <b class="n">return</b> <b class="r">RT_EOK</b><b class="p">;</b>
<b class="p">}</b>



<b class="g">static</b> <b class="t">rt_ssize_t</b> <b class="t">rt_sfud_read</b><b class="p">(</b><b class="t">rt_device_t</b> <b class="t">dev</b><b class="p">,</b> <b class="t">rt_off_t</b> <b class="t">pos</b><b class="p">,</b> <b class="g">void</b><b class="p">*</b> <b class="t">buffer</b><b class="p">,</b> <b class="t">rt_size_t</b> <b class="t">size</b><b class="p">)</b> <b class="p">{</b>
    <b class="n">struct</b> <b class="t">spi_flash_device</b> <b class="p">*</b><b class="t">rtt_dev</b> <b class="p">=</b> <b class="p">(</b><b class="n">struct</b> <b class="t">spi_flash_device</b> <b class="p">*</b><b class="p">)</b> <b class="p">(</b><b class="t">dev</b><b class="p">-</b><b class="p">&gt;</b><b class="t">user_data</b><b class="p">)</b><b class="p">;</b>
    <b class="t">sfud_flash</b> <b class="p">*</b><b class="t">sfud_dev</b> <b class="p">=</b> <b class="p">(</b><b class="t">sfud_flash</b> <b class="p">*</b><b class="p">)</b> <b class="p">(</b><b class="t">rtt_dev</b><b class="p">-</b><b class="p">&gt;</b><b class="t">user_data</b><b class="p">)</b><b class="p">;</b>

    <b class="r">RT_ASSERT</b><b class="p">(</b><b class="t">dev</b><b class="p">)</b><b class="p">;</b>
    <b class="r">RT_ASSERT</b><b class="p">(</b><b class="t">rtt_dev</b><b class="p">)</b><b class="p">;</b>
    <b class="r">RT_ASSERT</b><b class="p">(</b><b class="t">sfud_dev</b><b class="p">)</b><b class="p">;</b>
<b class="p">    /* change the block device's logic address to physical address */</b>
    <b class="t">rt_off_t</b> <b class="t">phy_pos</b> <b class="p">=</b> <b class="t">pos</b> <b class="p">*</b> <b class="t">rtt_dev</b><b class="p">-</b><b class="p">&gt;</b><b class="t">geometry</b><b class="p">.</b><b class="t">bytes_per_sector</b><b class="p">;</b>
    <b class="t">rt_size_t</b> <b class="t">phy_size</b> <b class="p">=</b> <b class="t">size</b> <b class="p">*</b> <b class="t">rtt_dev</b><b class="p">-</b><b class="p">&gt;</b><b class="t">geometry</b><b class="p">.</b><b class="t">bytes_per_sector</b><b class="p">;</b>

    <b class="n">if</b> <b class="p">(</b><b class="t">sfud_read</b><b class="p">(</b><b class="t">sfud_dev</b><b class="p">,</b> <b class="t">phy_pos</b><b class="p">,</b> <b class="t">phy_size</b><b class="p">,</b> <b class="t">buffer</b><b class="p">)</b> <b class="p">!</b><b class="p">=</b> <b class="r">SFUD_SUCCESS</b><b class="p">)</b> <b class="p">{</b>
        <b class="n">return</b> <b class="r">0</b><b class="p">;</b>
    <b class="p">}</b> <b class="n">else</b> <b class="p">{</b>
        <b class="n">return</b> <b class="t">size</b><b class="p">;</b>
    <b class="p">}</b>
<b class="p">}</b>


<b class="g">static</b> <b class="t">rt_ssize_t</b> <b class="t">rt_sfud_write</b><b class="p">(</b><b class="t">rt_device_t</b> <b class="t">dev</b><b class="p">,</b> <b class="t">rt_off_t</b> <b class="t">pos</b><b class="p">,</b> <b class="g">const</b> <b class="g">void</b><b class="p">*</b> <b class="t">buffer</b><b class="p">,</b> <b class="t">rt_size_t</b> <b class="t">size</b><b class="p">)</b> <b class="p">{</b>
    <b class="n">struct</b> <b class="t">spi_flash_device</b> <b class="p">*</b><b class="t">rtt_dev</b> <b class="p">=</b> <b class="p">(</b><b class="n">struct</b> <b class="t">spi_flash_device</b> <b class="p">*</b><b class="p">)</b> <b class="p">(</b><b class="t">dev</b><b class="p">-</b><b class="p">&gt;</b><b class="t">user_data</b><b class="p">)</b><b class="p">;</b>
    <b class="t">sfud_flash</b> <b class="p">*</b><b class="t">sfud_dev</b> <b class="p">=</b> <b class="p">(</b><b class="t">sfud_flash</b> <b class="p">*</b><b class="p">)</b> <b class="p">(</b><b class="t">rtt_dev</b><b class="p">-</b><b class="p">&gt;</b><b class="t">user_data</b><b class="p">)</b><b class="p">;</b>

    <b class="r">RT_ASSERT</b><b class="p">(</b><b class="t">dev</b><b class="p">)</b><b class="p">;</b>
    <b class="r">RT_ASSERT</b><b class="p">(</b><b class="t">rtt_dev</b><b class="p">)</b><b class="p">;</b>
    <b class="r">RT_ASSERT</b><b class="p">(</b><b class="t">sfud_dev</b><b class="p">)</b><b class="p">;</b>
<b class="p">    /* change the block device's logic address to physical address */</b>
    <b class="t">rt_off_t</b> <b class="t">phy_pos</b> <b class="p">=</b> <b class="t">pos</b> <b class="p">*</b> <b class="t">rtt_dev</b><b class="p">-</b><b class="p">&gt;</b><b class="t">geometry</b><b class="p">.</b><b class="t">bytes_per_sector</b><b class="p">;</b>
    <b class="t">rt_size_t</b> <b class="t">phy_size</b> <b class="p">=</b> <b class="t">size</b> <b class="p">*</b> <b class="t">rtt_dev</b><b class="p">-</b><b class="p">&gt;</b><b class="t">geometry</b><b class="p">.</b><b class="t">bytes_per_sector</b><b class="p">;</b>

    <b class="n">if</b> <b class="p">(</b><b class="t">sfud_erase_write</b><b class="p">(</b><b class="t">sfud_dev</b><b class="p">,</b> <b class="t">phy_pos</b><b class="p">,</b> <b class="t">phy_size</b><b class="p">,</b> <b class="t">buffer</b><b class="p">)</b> <b class="p">!</b><b class="p">=</b> <b class="r">SFUD_SUCCESS</b><b class="p">)</b> <b class="p">{</b>
        <b class="n">return</b> <b class="r">0</b><b class="p">;</b>
    <b class="p">}</b> <b class="n">else</b> <b class="p">{</b>
        <b class="n">return</b> <b class="t">size</b><b class="p">;</b>
    <b class="p">}</b>
<b class="p">}</b>

<b class="p">/**</b>
<b class="p"> * SPI write data then read data</b>
<b class="p"> */</b>

<b class="g">static</b> <b class="t">sfud_err</b> <b class="t">spi_write_read</b><b class="p">(</b><b class="g">const</b> <b class="t">sfud_spi</b> <b class="p">*</b><b class="t">spi</b><b class="p">,</b> <b class="g">const</b> <b class="t">uint8_t</b> <b class="p">*</b><b class="t">write_buf</b><b class="p">,</b> <b class="t">size_t</b> <b class="t">write_size</b><b class="p">,</b> <b class="t">uint8_t</b> <b class="p">*</b><b class="t">read_buf</b><b class="p">,</b>
        <b class="t">size_t</b> <b class="t">read_size</b><b class="p">)</b> <b class="p">{</b>
    <b class="t">sfud_err</b> <b class="t">result</b> <b class="p">=</b> <b class="r">SFUD_SUCCESS</b><b class="p">;</b>
    <b class="t">sfud_flash</b> <b class="p">*</b><b class="t">sfud_dev</b> <b class="p">=</b> <b class="p">(</b><b class="t">sfud_flash</b> <b class="p">*</b><b class="p">)</b> <b class="p">(</b><b class="t">spi</b><b class="p">-</b><b class="p">&gt;</b><b class="t">user_data</b><b class="p">)</b><b class="p">;</b>
    <b class="n">struct</b> <b class="t">spi_flash_device</b> <b class="p">*</b><b class="t">rtt_dev</b> <b class="p">=</b> <b class="p">(</b><b class="n">struct</b> <b class="t">spi_flash_device</b> <b class="p">*</b><b class="p">)</b> <b class="p">(</b><b class="t">sfud_dev</b><b class="p">-</b><b class="p">&gt;</b><b class="t">user_data</b><b class="p">)</b><b class="p">;</b>

    <b class="r">RT_ASSERT</b><b class="p">(</b><b class="t">spi</b><b class="p">)</b><b class="p">;</b>
    <b class="r">RT_ASSERT</b><b class="p">(</b><b class="t">sfud_dev</b><b class="p">)</b><b class="p">;</b>
    <b class="r">RT_ASSERT</b><b class="p">(</b><b class="t">rtt_dev</b><b class="p">)</b><b class="p">;</b>
<b class="n">#ifdef</b> <b class="r">SFUD_USING_QSPI</b>
    <b class="n">struct</b> <b class="t">rt_qspi_device</b> <b class="p">*</b><b class="t">qspi_dev</b> <b class="p">=</b> <b class="r">RT_NULL</b><b class="p">;</b>
<b class="n">#endif</b>
    <b class="n">if</b> <b class="p">(</b><b class="t">write_size</b><b class="p">)</b> <b class="p">{</b>
        <b class="r">RT_ASSERT</b><b class="p">(</b><b class="t">write_buf</b><b class="p">)</b><b class="p">;</b>
    <b class="p">}</b>
    <b class="n">if</b> <b class="p">(</b><b class="t">read_size</b><b class="p">)</b> <b class="p">{</b>
        <b class="r">RT_ASSERT</b><b class="p">(</b><b class="t">read_buf</b><b class="p">)</b><b class="p">;</b>
    <b class="p">}</b>
<b class="n">#ifdef</b> <b class="r">SFUD_USING_QSPI</b>
    <b class="n">if</b><b class="p">(</b><b class="t">rtt_dev</b><b class="p">-</b><b class="p">&gt;</b><b class="t">rt_spi_device</b><b class="p">-</b><b class="p">&gt;</b><b class="t">bus</b><b class="p">-</b><b class="p">&gt;</b><b class="t">mode</b> <b class="p">&amp;</b> <b class="r">RT_SPI_BUS_MODE_QSPI</b><b class="p">)</b> <b class="p">{</b>
        <b class="t">qspi_dev</b> <b class="p">=</b> <b class="p">(</b><b class="n">struct</b> <b class="t">rt_qspi_device</b> <b class="p">*</b><b class="p">)</b> <b class="p">(</b><b class="t">rtt_dev</b><b class="p">-</b><b class="p">&gt;</b><b class="t">rt_spi_device</b><b class="p">)</b><b class="p">;</b>
        <b class="n">if</b> <b class="p">(</b><b class="t">write_size</b> <b class="p">&amp;</b><b class="p">&amp;</b> <b class="t">read_size</b><b class="p">)</b> <b class="p">{</b>
            <b class="n">if</b> <b class="p">(</b><b class="t">rt_qspi_send_then_recv</b><b class="p">(</b><b class="t">qspi_dev</b><b class="p">,</b> <b class="t">write_buf</b><b class="p">,</b> <b class="t">write_size</b><b class="p">,</b> <b class="t">read_buf</b><b class="p">,</b> <b class="t">read_size</b><b class="p">)</b> <b class="p">&lt;</b><b class="p">=</b> <b class="r">0</b><b class="p">)</b> <b class="p">{</b>
                <b class="t">result</b> <b class="p">=</b> <b class="r">SFUD_ERR_TIMEOUT</b><b class="p">;</b>
            <b class="p">}</b>
        <b class="p">}</b> <b class="n">else</b> <b class="n">if</b> <b class="p">(</b><b class="t">write_size</b><b class="p">)</b> <b class="p">{</b>
            <b class="n">if</b> <b class="p">(</b><b class="t">rt_qspi_send</b><b class="p">(</b><b class="t">qspi_dev</b><b class="p">,</b> <b class="t">write_buf</b><b class="p">,</b> <b class="t">write_size</b><b class="p">)</b> <b class="p">&lt;</b><b class="p">=</b> <b class="r">0</b><b class="p">)</b> <b class="p">{</b>
                <b class="t">result</b> <b class="p">=</b> <b class="r">SFUD_ERR_TIMEOUT</b><b class="p">;</b>
            <b class="p">}</b>
        <b class="p">}</b>
    <b class="p">}</b>
    <b class="n">else</b>
<b class="n">#endif</b>
    <b class="p">{</b>
        <b class="n">if</b> <b class="p">(</b><b class="t">write_size</b> <b class="p">&amp;</b><b class="p">&amp;</b> <b class="t">read_size</b><b class="p">)</b> <b class="p">{</b>
            <b class="n">if</b> <b class="p">(</b><b class="t">rt_spi_send_then_recv</b><b class="p">(</b><b class="t">rtt_dev</b><b class="p">-</b><b class="p">&gt;</b><b class="t">rt_spi_device</b><b class="p">,</b> <b class="t">write_buf</b><b class="p">,</b> <b class="t">write_size</b><b class="p">,</b> <b class="t">read_buf</b><b class="p">,</b> <b class="t">read_size</b><b class="p">)</b> <b class="p">!</b><b class="p">=</b> <b class="r">RT_EOK</b><b class="p">)</b> <b class="p">{</b>
                <b class="t">result</b> <b class="p">=</b> <b class="r">SFUD_ERR_TIMEOUT</b><b class="p">;</b>
            <b class="p">}</b>
        <b class="p">}</b> <b class="n">else</b> <b class="n">if</b> <b class="p">(</b><b class="t">write_size</b><b class="p">)</b> <b class="p">{</b>
            <b class="n">if</b> <b class="p">(</b><b class="t">rt_spi_send</b><b class="p">(</b><b class="t">rtt_dev</b><b class="p">-</b><b class="p">&gt;</b><b class="t">rt_spi_device</b><b class="p">,</b> <b class="t">write_buf</b><b class="p">,</b> <b class="t">write_size</b><b class="p">)</b> <b class="p">&lt;</b><b class="p">=</b> <b class="r">0</b><b class="p">)</b> <b class="p">{</b>
                <b class="t">result</b> <b class="p">=</b> <b class="r">SFUD_ERR_TIMEOUT</b><b class="p">;</b>
            <b class="p">}</b>
        <b class="p">}</b> <b class="n">else</b> <b class="p">{</b>
            <b class="n">if</b> <b class="p">(</b><b class="t">rt_spi_recv</b><b class="p">(</b><b class="t">rtt_dev</b><b class="p">-</b><b class="p">&gt;</b><b class="t">rt_spi_device</b><b class="p">,</b> <b class="t">read_buf</b><b class="p">,</b> <b class="t">read_size</b><b class="p">)</b> <b class="p">&lt;</b><b class="p">=</b> <b class="r">0</b><b class="p">)</b> <b class="p">{</b>
                <b class="t">result</b> <b class="p">=</b> <b class="r">SFUD_ERR_TIMEOUT</b><b class="p">;</b>
            <b class="p">}</b>
        <b class="p">}</b>
    <b class="p">}</b>

    <b class="n">return</b> <b class="t">result</b><b class="p">;</b>
<b class="p">}</b>

<b class="n">#ifdef</b> <b class="r">SFUD_USING_QSPI</b>
<b class="p">/**</b>
<b class="p"> * QSPI fast read data</b>
<b class="p"> */</b>

<b class="g">static</b> <b class="t">sfud_err</b> <b class="t">qspi_read</b><b class="p">(</b><b class="g">const</b> <b class="n">struct</b> <b class="t">__sfud_spi</b> <b class="p">*</b><b class="t">spi</b><b class="p">,</b> <b class="t">uint32_t</b> <b class="t">addr</b><b class="p">,</b> <b class="t">sfud_qspi_read_cmd_format</b> <b class="p">*</b><b class="t">qspi_read_cmd_format</b><b class="p">,</b> <b class="t">uint8_t</b> <b class="p">*</b><b class="t">read_buf</b><b class="p">,</b> <b class="t">size_t</b> <b class="t">read_size</b><b class="p">)</b> <b class="p">{</b>
    <b class="n">struct</b> <b class="t">rt_qspi_message</b> <b class="t">message</b><b class="p">;</b>
    <b class="t">sfud_err</b> <b class="t">result</b> <b class="p">=</b> <b class="r">SFUD_SUCCESS</b><b class="p">;</b>

    <b class="t">sfud_flash</b> <b class="p">*</b><b class="t">sfud_dev</b> <b class="p">=</b> <b class="p">(</b><b class="t">sfud_flash</b> <b class="p">*</b><b class="p">)</b> <b class="p">(</b><b class="t">spi</b><b class="p">-</b><b class="p">&gt;</b><b class="t">user_data</b><b class="p">)</b><b class="p">;</b>
    <b class="n">struct</b> <b class="t">spi_flash_device</b> <b class="p">*</b><b class="t">rtt_dev</b> <b class="p">=</b> <b class="p">(</b><b class="n">struct</b> <b class="t">spi_flash_device</b> <b class="p">*</b><b class="p">)</b> <b class="p">(</b><b class="t">sfud_dev</b><b class="p">-</b><b class="p">&gt;</b><b class="t">user_data</b><b class="p">)</b><b class="p">;</b>
    <b class="n">struct</b> <b class="t">rt_qspi_device</b> <b class="p">*</b><b class="t">qspi_dev</b> <b class="p">=</b> <b class="p">(</b><b class="n">struct</b> <b class="t">rt_qspi_device</b> <b class="p">*</b><b class="p">)</b> <b class="p">(</b><b class="t">rtt_dev</b><b class="p">-</b><b class="p">&gt;</b><b class="t">rt_spi_device</b><b class="p">)</b><b class="p">;</b>

    <b class="r">RT_ASSERT</b><b class="p">(</b><b class="t">spi</b><b class="p">)</b><b class="p">;</b>
    <b class="r">RT_ASSERT</b><b class="p">(</b><b class="t">sfud_dev</b><b class="p">)</b><b class="p">;</b>
    <b class="r">RT_ASSERT</b><b class="p">(</b><b class="t">rtt_dev</b><b class="p">)</b><b class="p">;</b>
    <b class="r">RT_ASSERT</b><b class="p">(</b><b class="t">qspi_dev</b><b class="p">)</b><b class="p">;</b>

<b class="p">    /* set message struct */</b>
    <b class="t">message</b><b class="p">.</b><b class="t">instruction</b><b class="p">.</b><b class="t">content</b> <b class="p">=</b> <b class="t">qspi_read_cmd_format</b><b class="p">-</b><b class="p">&gt;</b><b class="t">instruction</b><b class="p">;</b>
    <b class="t">message</b><b class="p">.</b><b class="t">instruction</b><b class="p">.</b><b class="t">qspi_lines</b> <b class="p">=</b> <b class="t">qspi_read_cmd_format</b><b class="p">-</b><b class="p">&gt;</b><b class="t">instruction_lines</b><b class="p">;</b>

    <b class="t">message</b><b class="p">.</b><b class="t">address</b><b class="p">.</b><b class="t">content</b> <b class="p">=</b> <b class="t">addr</b><b class="p">;</b>
    <b class="t">message</b><b class="p">.</b><b class="t">address</b><b class="p">.</b><b class="t">size</b> <b class="p">=</b> <b class="t">qspi_read_cmd_format</b><b class="p">-</b><b class="p">&gt;</b><b class="t">address_size</b><b class="p">;</b>
    <b class="t">message</b><b class="p">.</b><b class="t">address</b><b class="p">.</b><b class="t">qspi_lines</b> <b class="p">=</b> <b class="t">qspi_read_cmd_format</b><b class="p">-</b><b class="p">&gt;</b><b class="t">address_lines</b><b class="p">;</b>

    <b class="t">message</b><b class="p">.</b><b class="t">alternate_bytes</b><b class="p">.</b><b class="t">content</b> <b class="p">=</b> <b class="r">0</b><b class="p">;</b>
    <b class="t">message</b><b class="p">.</b><b class="t">alternate_bytes</b><b class="p">.</b><b class="t">size</b> <b class="p">=</b> <b class="r">0</b><b class="p">;</b>
    <b class="t">message</b><b class="p">.</b><b class="t">alternate_bytes</b><b class="p">.</b><b class="t">qspi_lines</b> <b class="p">=</b> <b class="r">0</b><b class="p">;</b>

    <b class="t">message</b><b class="p">.</b><b class="t">dummy_cycles</b> <b class="p">=</b> <b class="t">qspi_read_cmd_format</b><b class="p">-</b><b class="p">&gt;</b><b class="t">dummy_cycles</b><b class="p">;</b>

    <b class="t">message</b><b class="p">.</b><b class="t">parent</b><b class="p">.</b><b class="t">send_buf</b> <b class="p">=</b> <b class="r">RT_NULL</b><b class="p">;</b>
    <b class="t">message</b><b class="p">.</b><b class="t">parent</b><b class="p">.</b><b class="t">recv_buf</b> <b class="p">=</b> <b class="t">read_buf</b><b class="p">;</b>
    <b class="t">message</b><b class="p">.</b><b class="t">parent</b><b class="p">.</b><b class="t">length</b> <b class="p">=</b> <b class="t">read_size</b><b class="p">;</b>
    <b class="t">message</b><b class="p">.</b><b class="t">parent</b><b class="p">.</b><b class="t">cs_release</b> <b class="p">=</b> <b class="r">1</b><b class="p">;</b>
    <b class="t">message</b><b class="p">.</b><b class="t">parent</b><b class="p">.</b><b class="t">cs_take</b> <b class="p">=</b> <b class="r">1</b><b class="p">;</b>
    <b class="t">message</b><b class="p">.</b><b class="t">qspi_data_lines</b> <b class="p">=</b> <b class="t">qspi_read_cmd_format</b><b class="p">-</b><b class="p">&gt;</b><b class="t">data_lines</b><b class="p">;</b>

    <b class="n">if</b> <b class="p">(</b><b class="t">rt_qspi_transfer_message</b><b class="p">(</b><b class="t">qspi_dev</b><b class="p">,</b> <b class="p">&amp;</b><b class="t">message</b><b class="p">)</b> <b class="p">!</b><b class="p">=</b> <b class="t">read_size</b><b class="p">)</b> <b class="p">{</b>
        <b class="t">result</b> <b class="p">=</b> <b class="r">SFUD_ERR_TIMEOUT</b><b class="p">;</b>
    <b class="p">}</b>

    <b class="n">return</b> <b class="t">result</b><b class="p">;</b>
<b class="p">}</b>
<b class="n">#endif</b>

<b class="g">static</b> <b class="g">void</b> <b class="t">spi_lock</b><b class="p">(</b><b class="g">const</b> <b class="t">sfud_spi</b> <b class="p">*</b><b class="t">spi</b><b class="p">)</b> <b class="p">{</b>
    <b class="t">sfud_flash</b> <b class="p">*</b><b class="t">sfud_dev</b> <b class="p">=</b> <b class="p">(</b><b class="t">sfud_flash</b> <b class="p">*</b><b class="p">)</b> <b class="p">(</b><b class="t">spi</b><b class="p">-</b><b class="p">&gt;</b><b class="t">user_data</b><b class="p">)</b><b class="p">;</b>
    <b class="n">struct</b> <b class="t">spi_flash_device</b> <b class="p">*</b><b class="t">rtt_dev</b> <b class="p">=</b> <b class="p">(</b><b class="n">struct</b> <b class="t">spi_flash_device</b> <b class="p">*</b><b class="p">)</b> <b class="p">(</b><b class="t">sfud_dev</b><b class="p">-</b><b class="p">&gt;</b><b class="t">user_data</b><b class="p">)</b><b class="p">;</b>

    <b class="r">RT_ASSERT</b><b class="p">(</b><b class="t">spi</b><b class="p">)</b><b class="p">;</b>
    <b class="r">RT_ASSERT</b><b class="p">(</b><b class="t">sfud_dev</b><b class="p">)</b><b class="p">;</b>
    <b class="r">RT_ASSERT</b><b class="p">(</b><b class="t">rtt_dev</b><b class="p">)</b><b class="p">;</b>

    <b class="t">rt_mutex_take</b><b class="p">(</b><b class="p">&amp;</b><b class="p">(</b><b class="t">rtt_dev</b><b class="p">-</b><b class="p">&gt;</b><b class="t">lock</b><b class="p">)</b><b class="p">,</b> <b class="r">RT_WAITING_FOREVER</b><b class="p">)</b><b class="p">;</b>
<b class="p">}</b>


<b class="g">static</b> <b class="g">void</b> <b class="t">spi_unlock</b><b class="p">(</b><b class="g">const</b> <b class="t">sfud_spi</b> <b class="p">*</b><b class="t">spi</b><b class="p">)</b> <b class="p">{</b>
    <b class="t">sfud_flash</b> <b class="p">*</b><b class="t">sfud_dev</b> <b class="p">=</b> <b class="p">(</b><b class="t">sfud_flash</b> <b class="p">*</b><b class="p">)</b> <b class="p">(</b><b class="t">spi</b><b class="p">-</b><b class="p">&gt;</b><b class="t">user_data</b><b class="p">)</b><b class="p">;</b>
    <b class="n">struct</b> <b class="t">spi_flash_device</b> <b class="p">*</b><b class="t">rtt_dev</b> <b class="p">=</b> <b class="p">(</b><b class="n">struct</b> <b class="t">spi_flash_device</b> <b class="p">*</b><b class="p">)</b> <b class="p">(</b><b class="t">sfud_dev</b><b class="p">-</b><b class="p">&gt;</b><b class="t">user_data</b><b class="p">)</b><b class="p">;</b>

    <b class="r">RT_ASSERT</b><b class="p">(</b><b class="t">spi</b><b class="p">)</b><b class="p">;</b>
    <b class="r">RT_ASSERT</b><b class="p">(</b><b class="t">sfud_dev</b><b class="p">)</b><b class="p">;</b>
    <b class="r">RT_ASSERT</b><b class="p">(</b><b class="t">rtt_dev</b><b class="p">)</b><b class="p">;</b>

    <b class="t">rt_mutex_release</b><b class="p">(</b><b class="p">&amp;</b><b class="p">(</b><b class="t">rtt_dev</b><b class="p">-</b><b class="p">&gt;</b><b class="t">lock</b><b class="p">)</b><b class="p">)</b><b class="p">;</b>
<b class="p">}</b>

<b class="g">static</b> <b class="g">void</b> <b class="t">retry_delay_100us</b><b class="p">(</b><b class="g">void</b><b class="p">)</b> <b class="p">{</b>
<b class="p">    /* 100 microsecond delay */</b>
    <b class="t">rt_thread_delay</b><b class="p">(</b><b class="p">(</b><b class="r">RT_TICK_PER_SECOND</b> <b class="p">*</b> <b class="r">1</b> <b class="p">+</b> <b class="r">9999</b><b class="p">)</b> <b class="p">/</b> <b class="r">10000</b><b class="p">)</b><b class="p">;</b>
<b class="p">}</b>


<b class="t">sfud_err</b> <b class="t">sfud_spi_port_init</b><b class="p">(</b><b class="t">sfud_flash</b> <b class="p">*</b><b class="t">flash</b><b class="p">)</b> <b class="p">{</b>
    <b class="t">sfud_err</b> <b class="t">result</b> <b class="p">=</b> <b class="r">SFUD_SUCCESS</b><b class="p">;</b>

    <b class="r">RT_ASSERT</b><b class="p">(</b><b class="t">flash</b><b class="p">)</b><b class="p">;</b>

<b class="p">    /* port SPI device interface */</b>
    <b class="t">flash</b><b class="p">-</b><b class="p">&gt;</b><b class="t">spi</b><b class="p">.</b><b class="t">wr</b> <b class="p">=</b> <b class="t">spi_write_read</b><b class="p">;</b>
<b class="n">#ifdef</b> <b class="r">SFUD_USING_QSPI</b>
    <b class="t">flash</b><b class="p">-</b><b class="p">&gt;</b><b class="t">spi</b><b class="p">.</b><b class="t">qspi_read</b> <b class="p">=</b> <b class="t">qspi_read</b><b class="p">;</b>
<b class="n">#endif</b>
    <b class="t">flash</b><b class="p">-</b><b class="p">&gt;</b><b class="t">spi</b><b class="p">.</b><b class="t">lock</b> <b class="p">=</b> <b class="t">spi_lock</b><b class="p">;</b>
    <b class="t">flash</b><b class="p">-</b><b class="p">&gt;</b><b class="t">spi</b><b class="p">.</b><b class="t">unlock</b> <b class="p">=</b> <b class="t">spi_unlock</b><b class="p">;</b>
    <b class="t">flash</b><b class="p">-</b><b class="p">&gt;</b><b class="t">spi</b><b class="p">.</b><b class="t">user_data</b> <b class="p">=</b> <b class="t">flash</b><b class="p">;</b>
    <b class="n">if</b> <b class="p">(</b><b class="r">RT_TICK_PER_SECOND</b> <b class="p">&lt;</b> <b class="r">1000</b><b class="p">)</b> <b class="p">{</b>
        <b class="r">LOG_W</b><b class="p">(</b><b class="r ys">"[SFUD] Warning: The OS tick(%d) is less than 1000. So the flash write will take more time."</b><b class="p">,</b> <b class="r">RT_TICK_PER_SECOND</b><b class="p">)</b><b class="p">;</b>
    <b class="p">}</b>
<b class="p">    /* 100 microsecond delay */</b>
    <b class="t">flash</b><b class="p">-</b><b class="p">&gt;</b><b class="t">retry</b><b class="p">.</b><b class="t">delay</b> <b class="p">=</b> <b class="t">retry_delay_100us</b><b class="p">;</b>
<b class="p">    /* 60 seconds timeout */</b>
    <b class="t">flash</b><b class="p">-</b><b class="p">&gt;</b><b class="t">retry</b><b class="p">.</b><b class="t">times</b> <b class="p">=</b> <b class="r">60</b> <b class="p">*</b> <b class="r">10000</b><b class="p">;</b>

    <b class="n">return</b> <b class="t">result</b><b class="p">;</b>
<b class="p">}</b>

<b class="n">#ifdef</b> <b class="r">RT_USING_DEVICE_OPS</b>
<b class="g">const</b> <b class="g">static</b> <b class="n">struct</b> <b class="t">rt_device_ops</b> <b class="t">flash_device_ops</b> <b class="p">=</b>
<b class="p">{</b>
    <b class="r">RT_NULL</b><b class="p">,</b>
    <b class="r">RT_NULL</b><b class="p">,</b>
    <b class="r">RT_NULL</b><b class="p">,</b>
    <b class="t">rt_sfud_read</b><b class="p">,</b>
    <b class="t">rt_sfud_write</b><b class="p">,</b>
    <b class="t">rt_sfud_control</b>
<b class="p">}</b><b class="p">;</b>
<b class="n">#endif</b>

<b class="p">/**</b>
<b class="p"> * Probe SPI flash by SFUD (Serial Flash Universal Driver) driver library and though SPI device by specified configuration.</b>
<b class="p"> *</b>
<b class="p"> * @param spi_flash_dev_name the name which will create SPI flash device</b>
<b class="p"> * @param spi_dev_name using SPI device name</b>
<b class="p"> * @param spi_cfg SPI device configuration</b>
<b class="p"> * @param qspi_cfg QSPI device configuration</b>
<b class="p"> *</b>
<b class="p"> * @return probed SPI flash device, probe failed will return RT_NULL</b>
<b class="p"> */</b>

<b class="t">rt_spi_flash_device_t</b> <b class="t">rt_sfud_flash_probe_ex</b><b class="p">(</b><b class="g">const</b> <b class="g">char</b> <b class="p">*</b><b class="t">spi_flash_dev_name</b><b class="p">,</b> <b class="g">const</b> <b class="g">char</b> <b class="p">*</b><b class="t">spi_dev_name</b><b class="p">,</b>
        <b class="n">struct</b> <b class="t">rt_spi_configuration</b> <b class="p">*</b><b class="t">spi_cfg</b><b class="p">,</b> <b class="n">struct</b> <b class="t">rt_qspi_configuration</b> <b class="p">*</b><b class="t">qspi_cfg</b><b class="p">)</b>
<b class="p">{</b>
    <b class="t">rt_spi_flash_device_t</b> <b class="t">rtt_dev</b> <b class="p">=</b> <b class="r">RT_NULL</b><b class="p">;</b>
    <b class="t">sfud_flash</b> <b class="p">*</b><b class="t">sfud_dev</b> <b class="p">=</b> <b class="r">RT_NULL</b><b class="p">;</b>
    <b class="g">char</b> <b class="p">*</b><b class="t">spi_flash_dev_name_bak</b> <b class="p">=</b> <b class="r">RT_NULL</b><b class="p">,</b> <b class="p">*</b><b class="t">spi_dev_name_bak</b> <b class="p">=</b> <b class="r">RT_NULL</b><b class="p">;</b>
    <b class="g">extern</b> <b class="t">sfud_err</b> <b class="t">sfud_device_init</b><b class="p">(</b><b class="t">sfud_flash</b> <b class="p">*</b><b class="t">flash</b><b class="p">)</b><b class="p">;</b>
<b class="n">#ifdef</b> <b class="r">SFUD_USING_QSPI</b>
    <b class="n">struct</b> <b class="t">rt_qspi_device</b> <b class="p">*</b><b class="t">qspi_dev</b> <b class="p">=</b> <b class="r">RT_NULL</b><b class="p">;</b>
<b class="n">#endif</b>

    <b class="r">RT_ASSERT</b><b class="p">(</b><b class="t">spi_flash_dev_name</b><b class="p">)</b><b class="p">;</b>
    <b class="r">RT_ASSERT</b><b class="p">(</b><b class="t">spi_dev_name</b><b class="p">)</b><b class="p">;</b>

    <b class="t">rtt_dev</b> <b class="p">=</b> <b class="p">(</b><b class="t">rt_spi_flash_device_t</b><b class="p">)</b> <b class="t">rt_malloc</b><b class="p">(</b><b class="n">sizeof</b><b class="p">(</b><b class="n">struct</b> <b class="t">spi_flash_device</b><b class="p">)</b><b class="p">)</b><b class="p">;</b>
    <b class="t">sfud_dev</b> <b class="p">=</b> <b class="p">(</b><b class="t">sfud_flash_t</b><b class="p">)</b> <b class="t">rt_malloc</b><b class="p">(</b><b class="n">sizeof</b><b class="p">(</b><b class="t">sfud_flash</b><b class="p">)</b><b class="p">)</b><b class="p">;</b>
    <b class="t">spi_flash_dev_name_bak</b> <b class="p">=</b> <b class="p">(</b><b class="g">char</b> <b class="p">*</b><b class="p">)</b> <b class="t">rt_malloc</b><b class="p">(</b><b class="t">rt_strlen</b><b class="p">(</b><b class="t">spi_flash_dev_name</b><b class="p">)</b> <b class="p">+</b> <b class="r">1</b><b class="p">)</b><b class="p">;</b>
    <b class="t">spi_dev_name_bak</b> <b class="p">=</b> <b class="p">(</b><b class="g">char</b> <b class="p">*</b><b class="p">)</b> <b class="t">rt_malloc</b><b class="p">(</b><b class="t">rt_strlen</b><b class="p">(</b><b class="t">spi_dev_name</b><b class="p">)</b> <b class="p">+</b> <b class="r">1</b><b class="p">)</b><b class="p">;</b>



    <b class="n">if</b> <b class="p">(</b><b class="t">rtt_dev</b><b class="p">)</b> <b class="p">{</b>
        <b class="t">rt_memset</b><b class="p">(</b><b class="t">rtt_dev</b><b class="p">,</b> <b class="r">0</b><b class="p">,</b> <b class="n">sizeof</b><b class="p">(</b><b class="n">struct</b> <b class="t">spi_flash_device</b><b class="p">)</b><b class="p">)</b><b class="p">;</b>
<b class="p">        /* initialize lock */</b>
        <b class="t">rt_mutex_init</b><b class="p">(</b><b class="p">&amp;</b><b class="p">(</b><b class="t">rtt_dev</b><b class="p">-</b><b class="p">&gt;</b><b class="t">lock</b><b class="p">)</b><b class="p">,</b> <b class="t">spi_flash_dev_name</b><b class="p">,</b> <b class="r">RT_IPC_FLAG_PRIO</b><b class="p">)</b><b class="p">;</b>
    <b class="p">}</b>

    <b class="n">if</b> <b class="p">(</b><b class="t">rtt_dev</b> <b class="p">&amp;</b><b class="p">&amp;</b> <b class="t">sfud_dev</b> <b class="p">&amp;</b><b class="p">&amp;</b> <b class="t">spi_flash_dev_name_bak</b> <b class="p">&amp;</b><b class="p">&amp;</b> <b class="t">spi_dev_name_bak</b><b class="p">)</b> <b class="p">{</b>
        <b class="t">rt_memset</b><b class="p">(</b><b class="t">sfud_dev</b><b class="p">,</b> <b class="r">0</b><b class="p">,</b> <b class="n">sizeof</b><b class="p">(</b><b class="t">sfud_flash</b><b class="p">)</b><b class="p">)</b><b class="p">;</b>
        <b class="t">rt_strncpy</b><b class="p">(</b><b class="t">spi_flash_dev_name_bak</b><b class="p">,</b> <b class="t">spi_flash_dev_name</b><b class="p">,</b> <b class="t">rt_strlen</b><b class="p">(</b><b class="t">spi_flash_dev_name</b><b class="p">)</b><b class="p">)</b><b class="p">;</b>
        <b class="t">rt_strncpy</b><b class="p">(</b><b class="t">spi_dev_name_bak</b><b class="p">,</b> <b class="t">spi_dev_name</b><b class="p">,</b> <b class="t">rt_strlen</b><b class="p">(</b><b class="t">spi_dev_name</b><b class="p">)</b><b class="p">)</b><b class="p">;</b>
<b class="p">        /* make string end sign */</b>
        <b class="t">spi_flash_dev_name_bak</b><b class="p">[</b><b class="t">rt_strlen</b><b class="p">(</b><b class="t">spi_flash_dev_name</b><b class="p">)</b><b class="p">]</b> <b class="p">=</b> <b class="p">'</b><b class="p">\</b><b class="r">0</b><b class="p">'</b><b class="p">;</b>
        <b class="t">spi_dev_name_bak</b><b class="p">[</b><b class="t">rt_strlen</b><b class="p">(</b><b class="t">spi_dev_name</b><b class="p">)</b><b class="p">]</b> <b class="p">=</b> <b class="p">'</b><b class="p">\</b><b class="r">0</b><b class="p">'</b><b class="p">;</b>
        <b class="t">sfud_dev</b><b class="p">-</b><b class="p">&gt;</b><b class="t">name</b> <b class="p">=</b> <b class="t">spi_flash_dev_name_bak</b><b class="p">;</b>
<b class="p">        /* SPI configure */</b>
        <b class="p">{</b>
<b class="p">            /* RT-Thread SPI device initialize */</b>
            <b class="t">rtt_dev</b><b class="p">-</b><b class="p">&gt;</b><b class="t">rt_spi_device</b> <b class="p">=</b> <b class="p">(</b><b class="n">struct</b> <b class="t">rt_spi_device</b> <b class="p">*</b><b class="p">)</b> <b class="t">rt_device_find</b><b class="p">(</b><b class="t">spi_dev_name</b><b class="p">)</b><b class="p">;</b>
            <b class="n">if</b> <b class="p">(</b><b class="t">rtt_dev</b><b class="p">-</b><b class="p">&gt;</b><b class="t">rt_spi_device</b> <b class="p">=</b><b class="p">=</b> <b class="r">RT_NULL</b> <b class="p">|</b><b class="p">|</b> <b class="t">rtt_dev</b><b class="p">-</b><b class="p">&gt;</b><b class="t">rt_spi_device</b><b class="p">-</b><b class="p">&gt;</b><b class="t">parent</b><b class="p">.</b><b class="t">type</b> <b class="p">!</b><b class="p">=</b> <b class="p">RT_Device_Class_SPIDevice</b><b class="p">)</b> <b class="p">{</b>
                <b class="r">LOG_E</b><b class="p">(</b><b class="r ys">"ERROR: SPI device %s not found!"</b><b class="p">,</b> <b class="t">spi_dev_name</b><b class="p">)</b><b class="p">;</b>
                <b class="n">goto</b> <b class="t">error</b><b class="p">;</b>
            <b class="p">}</b>
            <b class="t">sfud_dev</b><b class="p">-</b><b class="p">&gt;</b><b class="t">spi</b><b class="p">.</b><b class="t">name</b> <b class="p">=</b> <b class="t">spi_dev_name_bak</b><b class="p">;</b>
</div><div style="position:absolute;left:0;top:939px;width:8px;height:9px;background:#b8d8b0"></div></div>
<div id="ov" class="a"><div class="ovb" style="top:34px;height:101px"></div>
<div class="ovl" style="left:4px;top:37px;width:16px"></div>
<div class="ovl" style="left:4px;top:39px;width:21px"></div>
<div class="ovl" style="left:8px;top:41px;width:5px"></div>
<div class="ovl" style="left:4px;top:45px;width:17px"></div>
<div class="ovl" style="left:4px;top:47px;width:6px"></div>
<div class="ovl" style="left:4px;top:49px;width:22px"></div>
<div class="ovl" style="left:4px;top:51px;width:24px"></div>
<div class="ovl" style="left:4px;top:53px;width:22px"></div>
<div class="ovl" style="left:4px;top:55px;width:11px"></div>
<div class="ovl" style="left:12px;top:57px;width:8px"></div>
<div class="ovl" style="left:4px;top:59px;width:21px"></div>
<div class="ovl" style="left:6px;top:61px;width:21px"></div>
<div class="ovl" style="left:8px;top:65px;width:22px"></div>
<div class="ovl" style="left:6px;top:67px;width:7px"></div>
<div class="ovl" style="left:4px;top:69px;width:22px"></div>
<div class="ovl" style="left:4px;top:71px;width:19px"></div>
<div class="ovl" style="left:8px;top:73px;width:14px"></div>
<div class="ovl" style="left:8px;top:75px;width:15px"></div>
<div class="ovl" style="left:12px;top:77px;width:9px"></div>
<div class="ovl" style="left:4px;top:79px;width:6px"></div>
<div class="ovl" style="left:8px;top:81px;width:19px"></div>
<div class="ovl" style="left:6px;top:85px;width:23px"></div>
<div class="ovl" style="left:8px;top:89px;width:9px"></div>
<div class="ovl" style="left:8px;top:93px;width:17px"></div>
<div class="ovl" style="left:10px;top:95px;width:6px"></div>
<div class="ovl" style="left:12px;top:99px;width:14px"></div>
<div class="ovl" style="left:6px;top:101px;width:23px"></div>
<div class="ovl" style="left:12px;top:103px;width:18px"></div>
<div class="ovl" style="left:4px;top:105px;width:12px"></div>
<div class="ovl" style="left:10px;top:107px;width:6px"></div>
<div class="ovl" style="left:10px;top:109px;width:13px"></div>
<div class="ovl" style="left:10px;top:111px;width:18px"></div>
<div class="ovl" style="left:8px;top:113px;width:15px"></div>
<div class="ovl" style="left:8px;top:115px;width:15px"></div>
<div class="ovl" style="left:4px;top:117px;width:19px"></div>
<div class="ovl" style="left:12px;top:119px;width:13px"></div>
<div class="ovl" style="left:4px;top:121px;width:16px"></div>
<div class="ovl" style="left:12px;top:123px;width:19px"></div>
<div class="ovl" style="left:8px;top:125px;width:16px"></div>
<div class="ovl" style="left:4px;top:127px;width:17px"></div>
<div class="ovl" style="left:8px;top:131px;width:15px"></div>
<div class="ovb" style="top:140px;height:18px"></div>
<div class="ovl" style="left:8px;top:143px;width:11px"></div>
<div class="ovl" style="left:4px;top:145px;width:8px"></div>
<div class="ovl" style="left:4px;top:147px;width:4px"></div>
<div class="ovl" style="left:8px;top:149px;width:9px"></div>
<div class="ovl" style="left:4px;top:151px;width:8px"></div>
<div class="ovl" style="left:6px;top:153px;width:23px"></div>
<div class="ovb" style="top:161px;height:19px"></div>
<div class="ovl" style="left:4px;top:164px;width:26px"></div>
<div class="ovl" style="left:10px;top:170px;width:5px"></div>
<div class="ovl" style="left:12px;top:172px;width:16px"></div>
<div class="ovl" style="left:8px;top:174px;width:7px"></div>
<div class="ovl" style="left:8px;top:176px;width:5px"></div>
<div class="ovb" style="top:182px;height:7px"></div>
<div class="ovl" style="left:4px;top:185px;width:18px"></div>
<div class="ovb" style="top:187px;height:59px"></div>
<div class="ovl" style="left:6px;top:190px;width:23px"></div>
<div class="ovl" style="left:4px;top:192px;width:22px"></div>
<div class="ovl" style="left:4px;top:194px;width:15px"></div>
<div class="ovl" style="left:4px;top:196px;width:10px"></div>
<div class="ovl" style="left:4px;top:198px;width:24px"></div>
<div class="ovl" style="left:6px;top:200px;width:23px"></div>
<div class="ovl" style="left:4px;top:202px;width:7px"></div>
<div class="ovl" style="left:8px;top:208px;width:13px"></div>
<div class="ovl" style="left:4px;top:210px;width:27px"></div>
<div class="ovl" style="left:6px;top:212px;width:19px"></div>
<div class="ovl" style="left:4px;top:216px;width:10px"></div>
<div class="ovl" style="left:4px;top:220px;width:26px"></div>
<div class="ovl" style="left:4px;top:222px;width:28px"></div>
<div class="ovl" style="left:10px;top:224px;width:6px"></div>
<div class="ovl" style="left:6px;top:226px;width:20px"></div>
<div class="ovl" style="left:4px;top:228px;width:15px"></div>
<div class="ovl" style="left:12px;top:232px;width:20px"></div>
<div class="ovl" style="left:4px;top:234px;width:23px"></div>
<div class="ovb" style="top:248px;height:5px"></div>
<div class="ovb" style="top:255px;height:80px"></div>
<div class="ovl" style="left:4px;top:260px;width:10px"></div>
<div class="ovl" style="left:6px;top:262px;width:4px"></div>
<div class="ovl" style="left:4px;top:268px;width:26px"></div>
<div class="ovl" style="left:6px;top:270px;width:18px"></div>
<div class="ovl" style="left:6px;top:274px;width:15px"></div>
<div class="ovl" style="left:4px;top:276px;width:11px"></div>
<div class="ovl" style="left:6px;top:278px;width:10px"></div>
<div class="ovl" style="left:8px;top:280px;width:4px"></div>
<div class="ovl" style="left:10px;top:282px;width:15px"></div>
<div class="ovl" style="left:10px;top:286px;width:7px"></div>
<div class="ovl" style="left:4px;top:294px;width:17px"></div>
<div class="ovl" style="left:12px;top:298px;width:16px"></div>
<div class="ovl" style="left:10px;top:300px;width:6px"></div>
<div class="ovl" style="left:4px;top:302px;width:8px"></div>
<div class="ovl" style="left:8px;top:304px;width:18px"></div>
<div class="ovl" style="left:12px;top:308px;width:19px"></div>
<div class="ovl" style="left:6px;top:310px;width:8px"></div>
<div class="ovl" style="left:4px;top:312px;width:4px"></div>
<div class="ovl" style="left:10px;top:314px;width:7px"></div>
<div class="ovl" style="left:4px;top:316px;width:17px"></div>
<div class="ovl" style="left:12px;top:320px;width:10px"></div>
<div class="ovl" style="left:4px;top:322px;width:13px"></div>
<div class="ovl" style="left:12px;top:324px;width:14px"></div>
<div class="ovl" style="left:8px;top:326px;width:8px"></div>
<div class="ovl" style="left:10px;top:328px;width:15px"></div>
<div class="ovb" style="top:338px;height:26px"></div>
<div class="ovl" style="left:12px;top:341px;width:20px"></div>
<div class="ovl" style="left:8px;top:343px;width:8px"></div>
<div class="ovl" style="left:8px;top:345px;width:20px"></div>
<div class="ovl" style="left:8px;top:347px;width:9px"></div>
<div class="ovl" style="left:12px;top:349px;width:8px"></div>
<div class="ovl" style="left:8px;top:351px;width:23px"></div>
<div class="ovl" style="left:8px;top:353px;width:5px"></div>
<div class="ovl" style="left:8px;top:355px;width:20px"></div>
<div class="ovl" style="left:12px;top:357px;width:7px"></div>
<div class="ovb" style="top:365px;height:26px"></div>
<div class="ovl" style="left:4px;top:368px;width:12px"></div>
<div class="ovl" style="left:4px;top:370px;width:20px"></div>
<div class="ovl" style="left:4px;top:372px;width:28px"></div>
<div class="ovl" style="left:6px;top:376px;width:23px"></div>
<div class="ovl" style="left:4px;top:380px;width:26px"></div>
<div class="ovl" style="left:8px;top:382px;width:21px"></div>
<div class="ovl" style="left:4px;top:386px;width:26px"></div>
<div class="ovb" style="top:393px;height:148px"></div>
<div class="ovl" style="left:6px;top:396px;width:21px"></div>
<div class="ovl" style="left:8px;top:400px;width:8px"></div>
<div class="ovl" style="left:8px;top:402px;width:18px"></div>
<div class="ovl" style="left:10px;top:404px;width:11px"></div>
<div class="ovl" style="left:4px;top:406px;width:25px"></div>
<div class="ovl" style="left:4px;top:408px;width:28px"></div>
<div class="ovl" style="left:10px;top:410px;width:15px"></div>
<div class="ovl" style="left:4px;top:412px;width:18px"></div>
<div class="ovl" style="left:4px;top:414px;width:16px"></div>
<div class="ovl" style="left:10px;top:418px;width:11px"></div>
<div class="ovl" style="left:8px;top:420px;width:20px"></div>
<div class="ovl" style="left:8px;top:422px;width:10px"></div>
<div class="ovl" style="left:4px;top:424px;width:27px"></div>
<div class="ovl" style="left:6px;top:426px;width:21px"></div>
<div class="ovl" style="left:10px;top:428px;width:4px"></div>
<div class="ovl" style="left:8px;top:430px;width:23px"></div>
<div class="ovl" style="left:4px;top:432px;width:7px"></div>
<div class="ovl" style="left:6px;top:440px;width:12px"></div>
<div class="ovl" style="left:12px;top:442px;width:9px"></div>
<div class="ovl" style="left:4px;top:444px;width:17px"></div>
<div class="ovl" style="left:6px;top:448px;width:16px"></div>
<div class="ovl" style="left:8px;top:450px;width:22px"></div>
<div class="ovl" style="left:6px;top:452px;width:6px"></div>
<div class="ovl" style="left:12px;top:454px;width:9px"></div>
<div class="ovl" style="left:4px;top:456px;width:12px"></div>
<div class="ovl" style="left:12px;top:460px;width:12px"></div>
<div class="ovl" style="left:12px;top:462px;width:11px"></div>
<div class="ovl" style="left:12px;top:464px;width:7px"></div>
<div class="ovl" style="left:6px;top:466px;width:21px"></div>
<div class="ovl" style="left:6px;top:468px;width:23px"></div>
<div class="ovl" style="left:8px;top:470px;width:11px"></div>
<div class="ovl" style="left:4px;top:476px;width:10px"></div>
<div class="ovl" style="left:8px;top:480px;width:10px"></div>
<div class="ovl" style="left:8px;top:482px;width:9px"></div>
<div class="ovl" style="left:12px;top:484px;width:4px"></div>
<div class="ovl" style="left:4px;top:488px;width:27px"></div>
<div class="ovl" style="left:4px;top:490px;width:20px"></div>
<div class="ovl" style="left:8px;top:492px;width:7px"></div>
<div class="ovl" style="left:10px;top:494px;width:17px"></div>
<div class="ovl" style="left:8px;top:496px;width:16px"></div>
<div class="ovl" style="left:4px;top:500px;width:11px"></div>
<div class="ovl" style="left:12px;top:502px;width:8px"></div>
<div class="ovl" style="left:6px;top:504px;width:5px"></div>
<div class="ovl" style="left:10px;top:508px;width:12px"></div>
<div class="ovl" style="left:4px;top:510px;width:6px"></div>
<div class="ovl" style="left:8px;top:512px;width:20px"></div>
<div class="ovl" style="left:6px;top:514px;width:23px"></div>
<div class="ovl" style="left:6px;top:516px;width:5px"></div>
<div class="ovl" style="left:4px;top:518px;width:12px"></div>
<div class="ovl" style="left:6px;top:520px;width:15px"></div>
<div class="ovl" style="left:4px;top:526px;width:5px"></div>
<div class="ovl" style="left:6px;top:530px;width:9px"></div>
<div class="ovl" style="left:8px;top:532px;width:6px"></div>
<div class="ovl" style="left:8px;top:534px;width:24px"></div>
<div class="ovl" style="left:8px;top:536px;width:4px"></div>
<div class="ovb" style="top:543px;height:32px"></div>
<div class="ovl" style="left:12px;top:546px;width:6px"></div>
<div class="ovl" style="left:8px;top:548px;width:5px"></div>
<div class="ovl" style="left:6px;top:550px;width:13px"></div>
<div class="ovl" style="left:4px;top:552px;width:22px"></div>
<div class="ovl" style="left:10px;top:558px;width:16px"></div>
<div class="ovl" style="left:8px;top:562px;width:8px"></div>
<div class="ovl" style="left:8px;top:564px;width:24px"></div>
<div class="ovl" style="left:12px;top:566px;width:20px"></div>
<div class="ovl" style="left:10px;top:568px;width:20px"></div>
<div class="ovl" style="left:8px;top:570px;width:20px"></div>
<div class="ovb" style="top:576px;height:21px"></div>
<div class="ovl" style="left:12px;top:579px;width:4px"></div>
<div class="ovl" style="left:10px;top:583px;width:11px"></div>
<div class="ovl" style="left:4px;top:585px;width:8px"></div>
<div class="ovl" style="left:4px;top:587px;width:16px"></div>
<div class="ovl" style="left:10px;top:591px;width:4px"></div>
<div class="ovl" style="left:10px;top:593px;width:11px"></div>
<div class="ovb" style="top:598px;height:29px"></div>
<div class="ovl" style="left:4px;top:601px;width:18px"></div>
<div class="ovl" style="left:8px;top:605px;width:21px"></div>
<div class="ovl" style="left:8px;top:607px;width:6px"></div>
<div class="ovl" style="left:8px;top:609px;width:12px"></div>
<div class="ovl" style="left:12px;top:615px;width:10px"></div>
<div class="ovl" style="left:10px;top:617px;width:18px"></div>
<div class="ovl" style="left:8px;top:619px;width:6px"></div>
<div class="ovl" style="left:10px;top:621px;width:13px"></div>
<div class="ovb" style="top:628px;height:346px"></div>
<div class="ovl" style="left:10px;top:631px;width:10px"></div>
<div class="ovl" style="left:4px;top:633px;width:14px"></div>
<div class="ovl" style="left:10px;top:635px;width:13px"></div>
<div class="ovl" style="left:4px;top:637px;width:4px"></div>
<div class="ovl" style="left:8px;top:639px;width:12px"></div>
<div class="ovl" style="left:4px;top:643px;width:25px"></div>
<div class="ovl" style="left:10px;top:645px;width:20px"></div>
<div class="ovl" style="left:8px;top:647px;width:18px"></div>
<div class="ovl" style="left:6px;top:653px;width:6px"></div>
<div class="ovl" style="left:8px;top:657px;width:6px"></div>
<div class="ovl" style="left:6px;top:663px;width:16px"></div>
<div class="ovl" style="left:4px;top:665px;width:6px"></div>
<div class="ovl" style="left:4px;top:667px;width:27px"></div>
<div class="ovl" style="left:6px;top:669px;width:8px"></div>
<div class="ovl" style="left:10px;top:671px;width:20px"></div>
<div class="ovl" style="left:4px;top:673px;width:26px"></div>
<div class="ovl" style="left:8px;top:675px;width:19px"></div>
<div class="ovl" style="left:4px;top:677px;width:4px"></div>
<div class="ovl" style="left:8px;top:681px;width:13px"></div>
<div class="ovl" style="left:8px;top:683px;width:15px"></div>
<div class="ovl" style="left:4px;top:685px;width:14px"></div>
<div class="ovl" style="left:12px;top:687px;width:14px"></div>
<div class="ovl" style="left:4px;top:691px;width:26px"></div>
<div class="ovl" style="left:10px;top:693px;width:13px"></div>
<div class="ovl" style="left:4px;top:695px;width:16px"></div>
<div class="ovl" style="left:12px;top:697px;width:6px"></div>
<div class="ovl" style="left:8px;top:699px;width:12px"></div>
<div class="ovl" style="left:4px;top:703px;width:25px"></div>
<div class="ovl" style="left:4px;top:705px;width:11px"></div>
<div class="ovl" style="left:6px;top:709px;width:10px"></div>
<div class="ovl" style="left:4px;top:715px;width:28px"></div>
<div class="ovl" style="left:8px;top:717px;width:21px"></div>
<div class="ovl" style="left:4px;top:719px;width:5px"></div>
<div class="ovl" style="left:8px;top:723px;width:8px"></div>
<div class="ovl" style="left:6px;top:725px;width:19px"></div>
<div class="ovl" style="left:8px;top:727px;width:8px"></div>
<div class="ovl" style="left:8px;top:729px;width:14px"></div>
<div class="ovl" style="left:6px;top:731px;width:24px"></div>
<div class="ovl" style="left:10px;top:733px;width:11px"></div>
<div class="ovl" style="left:8px;top:735px;width:16px"></div>
<div class="ovl" style="left:10px;top:737px;width:9px"></div>
<div class="ovl" style="left:8px;top:739px;width:19px"></div>
<div class="ovl" style="left:8px;top:741px;width:14px"></div>
<div class="ovl" style="left:4px;top:745px;width:21px"></div>
<div class="ovl" style="left:4px;top:747px;width:9px"></div>
<div class="ovl" style="left:4px;top:749px;width:14px"></div>
<div class="ovl" style="left:6px;top:751px;width:22px"></div>
<div class="ovl" style="left:4px;top:753px;width:27px"></div>
<div class="ovl" style="left:10px;top:757px;width:20px"></div>
<div class="ovl" style="left:6px;top:759px;width:14px"></div>
<div class="ovl" style="left:8px;top:763px;width:15px"></div>
<div class="ovl" style="left:8px;top:765px;width:20px"></div>
<div class="ovl" style="left:12px;top:767px;width:10px"></div>
<div class="ovl" style="left:4px;top:769px;width:16px"></div>
<div class="ovl" style="left:8px;top:771px;width:17px"></div>
<div class="ovl" style="left:4px;top:779px;width:17px"></div>
<div class="ovl" style="left:12px;top:781px;width:19px"></div>
<div class="ovl" style="left:4px;top:785px;width:16px"></div>
<div class="ovl" style="left:8px;top:791px;width:18px"></div>
<div class="ovl" style="left:4px;top:793px;width:11px"></div>
<div class="ovl" style="left:8px;top:795px;width:7px"></div>
<div class="ovl" style="left:10px;top:799px;width:18px"></div>
<div class="ovl" style="left:12px;top:801px;width:5px"></div>
<div class="ovl" style="left:4px;top:803px;width:11px"></div>
<div class="ovl" style="left:4px;top:805px;width:24px"></div>
<div class="ovl" style="left:4px;top:807px;width:24px"></div>
<div class="ovl" style="left:10px;top:809px;width:17px"></div>
<div class="ovl" style="left:4px;top:811px;width:7px"></div>
<div class="ovl" style="left:8px;top:813px;width:22px"></div>
<div class="ovl" style="left:6px;top:815px;width:11px"></div>
<div class="ovl" style="left:8px;top:819px;width:13px"></div>
<div class="ovl" style="left:6px;top:823px;width:24px"></div>
<div class="ovl" style="left:8px;top:827px;width:11px"></div>
<div class="ovl" style="left:4px;top:829px;width:17px"></div>
<div class="ovl" style="left:6px;top:831px;width:5px"></div>
<div class="ovl" style="left:8px;top:833px;width:24px"></div>
<div class="ovl" style="left:6px;top:835px;width:11px"></div>
<div class="ovl" style="left:6px;top:837px;width:11px"></div>
<div class="ovl" style="left:10px;top:839px;width:14px"></div>
<div class="ovl" style="left:6px;top:841px;width:25px"></div>
<div class="ovl" style="left:4px;top:843px;width:13px"></div>
<div class="ovl" style="left:8px;top:845px;width:6px"></div>
<div class="ovl" style="left:4px;top:847px;width:13px"></div>
<div class="ovl" style="left:8px;top:851px;width:11px"></div>
<div class="ovl" style="left:6px;top:853px;width:7px"></div>
<div class="ovl" style="left:4px;top:857px;width:11px"></div>
<div class="ovl" style="left:10px;top:859px;width:5px"></div>
<div class="ovl" style="left:8px;top:863px;width:5px"></div>
<div class="ovl" style="left:8px;top:865px;width:8px"></div>
<div class="ovl" style="left:10px;top:867px;width:5px"></div>
<div class="ovl" style="left:8px;top:869px;width:14px"></div>
<div class="ovl" style="left:4px;top:871px;width:9px"></div>
<div class="ovl" style="left:4px;top:873px;width:24px"></div>
<div class="ovl" style="left:4px;top:877px;width:13px"></div>
<div class="ovl" style="left:8px;top:879px;width:15px"></div>
<div class="ovl" style="left:4px;top:883px;width:4px"></div>
<div class="ovl" style="left:4px;top:885px;width:15px"></div>
<div class="ovl" style="left:4px;top:887px;width:21px"></div>
<div class="ovl" style="left:6px;top:891px;width:13px"></div>
<div class="ovl" style="left:4px;top:895px;width:26px"></div>
<div class="ovl" style="left:6px;top:897px;width:21px"></div>
<div class="ovl" style="left:6px;top:901px;width:19px"></div>
<div class="ovl" style="left:8px;top:903px;width:11px"></div>
<div class="ovl" style="left:4px;top:909px;width:18px"></div>
<div class="ovl" style="left:4px;top:911px;width:12px"></div>
<div class="ovl" style="left:4px;top:913px;width:23px"></div>
<div class="ovl" style="left:6px;top:915px;width:14px"></div>
<div class="ovl" style="left:6px;top:919px;width:26px"></div>
<div class="ovl" style="left:6px;top:921px;width:13px"></div>
<div class="ovl" style="left:12px;top:923px;width:6px"></div>
<div class="ovl" style="left:4px;top:925px;width:7px"></div>
<div class="ovl" style="left:8px;top:927px;width:16px"></div>
<div class="ovl" style="left:8px;top:935px;width:9px"></div>
<div class="ovl" style="left:10px;top:937px;width:13px"></div>
<div class="ovl" style="left:6px;top:943px;width:14px"></div>
<div class="ovl" style="left:12px;top:945px;width:6px"></div>
<div class="ovl" style="left:8px;top:947px;width:9px"></div>
<div class="ovl" style="left:4px;top:949px;width:24px"></div>
<div class="ovl" style="left:8px;top:951px;width:21px"></div>
<div class="ovl" style="left:8px;top:953px;width:7px"></div>
<div class="ovl" style="left:4px;top:957px;width:10px"></div>
<div class="ovl" style="left:8px;top:959px;width:18px"></div>
<div class="ovl" style="left:4px;top:961px;width:17px"></div>
<div class="ovl" style="left:10px;top:963px;width:11px"></div>
<div class="ovl" style="left:12px;top:965px;width:7px"></div>
<div class="ovl" style="left:6px;top:969px;width:22px"></div>
<div class="ovb" style="top:975px;height:8px"></div>
<div class="ovl" style="left:6px;top:978px;width:12px"></div>
<div class="ovy" style="top:404px"></div>
<div class="ovy" style="top:451px"></div>
<div class="ovy" style="top:492px"></div>
<div class="ovy" style="top:562px"></div>
<div class="ovthumb"></div><div class="ovh" style="top:75px"></div><div class="ovh" style="top:79px"></div></div>
<div id="rstrip" class="a"></div>

<div id="band" class="a"></div>
<div id="bhead" class="a"></div>
<div id="btitle" class="a">RT_SFUD_DEFAULT_SPI_CFG</div>

<!-- left panel toolbar icons -->
<svg class="a" style="left:18px;top:1048px" width="36" height="20" viewBox="0 0 36 20" shape-rendering="crispEdges">
<g fill="#8c8c7c"><rect x="6" y="3" width="2" height="2"/><rect x="4" y="6" width="2" height="2"/><rect x="8" y="6" width="2" height="2"/><rect x="2" y="11" width="10" height="2"/><rect x="0" y="16" width="2" height="2"/><rect x="12" y="16" width="2" height="2"/><rect x="14" y="9" width="8" height="2"/><rect x="22" y="3" width="12" height="2"/><rect x="22" y="17" width="12" height="2"/><rect x="30" y="6" width="2" height="2"/><rect x="26" y="10" width="2" height="2"/></g>
<g fill="#000080"><rect x="6" y="1" width="2" height="2"/><rect x="4" y="3" width="2" height="4"/><rect x="8" y="3" width="2" height="4"/><rect x="2" y="7" width="10" height="2"/><rect x="2" y="9" width="2" height="2"/><rect x="10" y="9" width="2" height="2"/><rect x="0" y="11" width="2" height="5"/><rect x="12" y="11" width="2" height="5"/><rect x="14" y="7" width="8" height="2"/><rect x="22" y="1" width="12" height="2"/><rect x="31" y="5" width="2" height="2"/><rect x="29" y="7" width="2" height="2"/><rect x="27" y="9" width="2" height="2"/><rect x="25" y="11" width="2" height="2"/><rect x="23" y="13" width="2" height="2"/><rect x="22" y="15" width="12" height="2"/></g>
</svg>
<div class="a" style="left:56px;top:1038px;width:41px;height:37px;background:#cce8ff;border:1px solid #99d1ff;border-radius:4px"></div>
<svg class="a" style="left:64px;top:1043px" width="26" height="28" viewBox="0 0 26 28" shape-rendering="crispEdges">
<rect x="2" y="2" width="24" height="26" fill="#c0c0c0"/><rect x="0" y="0" width="26" height="2" fill="#000"/><rect x="0" y="0" width="2" height="28" fill="#000"/>
<g fill="#ff0000"><rect x="6" y="6" width="4" height="2"/><rect x="6" y="12" width="4" height="2"/><rect x="6" y="18" width="4" height="2"/><rect x="6" y="24" width="4" height="2"/></g>
<g fill="#808080"><rect x="12" y="6" width="12" height="2"/><rect x="12" y="12" width="12" height="2"/><rect x="12" y="18" width="12" height="2"/><rect x="12" y="24" width="12" height="2"/></g>
</svg>
<svg class="a" style="left:101px;top:1042px" width="34" height="30" viewBox="0 0 34 30" shape-rendering="crispEdges">
<g fill="#0000ff"><rect x="3" y="1" width="6" height="12"/><rect x="1" y="3" width="10" height="8"/></g><rect x="6" y="8" width="2" height="2" fill="#ffffa0"/>
<g fill="#ff0000"><rect x="3" y="17" width="2" height="10"/><rect x="7" y="17" width="2" height="10"/><rect x="1" y="19" width="10" height="2"/><rect x="1" y="23" width="10" height="2"/></g>
<rect x="19" y="1" width="14" height="12" fill="#808080"/><rect x="21" y="3" width="10" height="8" fill="#00ffff"/><rect x="23" y="5" width="2" height="2" fill="#808080"/><rect x="27" y="5" width="2" height="2" fill="#808080"/>
<g fill="#888"><rect x="22" y="19" width="12" height="2"/><rect x="27" y="21" width="3" height="8"/></g>
<g fill="#ffff00"><rect x="20" y="17" width="12" height="2"/><rect x="25" y="19" width="3" height="8"/></g>
</svg>
<div class="a" style="left:140px;top:1040px;width:1px;height:34px;background:#707070"></div>
<svg class="a" style="left:151px;top:1043px" width="30" height="28" viewBox="0 0 30 28" shape-rendering="crispEdges">
<g fill="#201858"><rect x="4" y="0" width="8" height="2"/><rect x="18" y="0" width="8" height="2"/><rect x="0" y="2" width="4" height="24"/><rect x="26" y="2" width="4" height="24"/><rect x="12" y="2" width="6" height="26"/><rect x="4" y="24" width="8" height="2"/><rect x="18" y="24" width="8" height="2"/><rect x="0" y="26" width="4" height="2"/><rect x="26" y="26" width="4" height="2"/></g>
<g fill="#fff6c4"><rect x="2" y="2" width="10" height="22"/><rect x="18" y="2" width="10" height="22"/></g>
<g fill="#a89858"><rect x="4" y="5" width="8" height="2"/><rect x="4" y="9" width="8" height="2"/><rect x="4" y="13" width="8" height="2"/><rect x="4" y="17" width="8" height="2"/><rect x="4" y="21" width="8" height="2"/><rect x="20" y="5" width="8" height="2"/><rect x="20" y="9" width="8" height="2"/><rect x="20" y="13" width="8" height="2"/><rect x="20" y="17" width="8" height="2"/><rect x="20" y="21" width="8" height="2"/><rect x="10" y="2" width="2" height="22"/><rect x="26" y="2" width="2" height="22"/></g>
<rect x="14" y="2" width="2" height="24" fill="#100808"/>
</svg>
<svg class="a" style="left:190px;top:1041px" width="32" height="32" viewBox="0 0 32 32" shape-rendering="crispEdges">
<g fill="#3c8fc8"><rect x="14" y="0" width="4" height="4"/><rect x="12" y="2" width="8" height="6"/><rect x="4" y="4" width="6" height="6"/><rect x="22" y="4" width="6" height="6"/><rect x="6" y="6" width="20" height="10"/></g>
<g fill="#5aaee0"><rect x="14" y="2" width="4" height="6"/><rect x="8" y="8" width="16" height="4"/></g>
<g fill="#2c78ae"><rect x="0" y="14" width="4" height="4"/><rect x="28" y="14" width="4" height="4"/><rect x="2" y="12" width="28" height="8"/><rect x="6" y="16" width="20" height="10"/><rect x="4" y="22" width="6" height="6"/><rect x="22" y="22" width="6" height="6"/><rect x="12" y="24" width="8" height="6"/><rect x="14" y="28" width="4" height="4"/></g>
<g fill="#4a7890"><rect x="14" y="0" width="4" height="1"/><rect x="14" y="31" width="4" height="1"/><rect x="0" y="14" width="1" height="4"/><rect x="31" y="14" width="1" height="4"/></g>
<rect x="12" y="12" width="8" height="8" fill="#dae1eb"/>
</svg>
<!-- bottom header icon -->
<svg class="a" style="left:8px;top:1094px" width="34" height="30" viewBox="0 0 34 30" shape-rendering="crispEdges">
<rect x="10" y="4" width="16" height="2" fill="#000"/><rect x="8" y="24" width="16" height="2" fill="#000"/>
<g fill="#0a2a50"><rect x="4" y="8" width="4" height="2"/><rect x="6" y="10" width="2" height="4"/><rect x="28" y="8" width="4" height="2"/><rect x="28" y="10" width="2" height="4"/></g>
<g fill="#5a88b0"><rect x="4" y="14" width="2" height="4"/><rect x="2" y="18" width="4" height="4"/><rect x="26" y="14" width="2" height="4"/><rect x="24" y="18" width="4" height="4"/></g>
<g fill="#1e4a78"><rect x="2" y="0" width="8" height="8"/><rect x="26" y="0" width="8" height="8"/><rect x="0" y="22" width="8" height="8"/><rect x="24" y="22" width="8" height="8"/></g>
<g fill="#7ab8f0"><rect x="4" y="0" width="4" height="2"/><rect x="2" y="2" width="2" height="2"/><rect x="28" y="0" width="4" height="2"/><rect x="26" y="2" width="2" height="2"/><rect x="2" y="22" width="4" height="2"/><rect x="0" y="24" width="2" height="2"/><rect x="26" y="22" width="4" height="2"/><rect x="24" y="24" width="2" height="2"/></g>
<g fill="#000"><rect x="8" y="6" width="2" height="2"/><rect x="32" y="6" width="2" height="2"/><rect x="6" y="28" width="2" height="2"/><rect x="30" y="28" width="2" height="2"/></g>
<g fill="#4a90d8"><rect x="18" y="12" width="4" height="4"/><rect x="16" y="14" width="6" height="2"/><rect x="14" y="16" width="8" height="2"/></g>
<rect x="22" y="10" width="2" height="8" fill="#000"/><rect x="12" y="16" width="12" height="2" fill="#000"/>
</svg>

<div id="bdesc" class="a"><span>Constant in spi_flash_sfud.c (F:\hlm\...\spi) at line 26 (6 lines)</span></div>
<div id="bleft" class="a"></div>
<div id="bcode" class="a"></div>
<div class="a" style="left:0;top:1131px;width:2276px;height:448px;overflow:hidden"><div style="position:absolute;left:0;top:-1131px">
<div class="cl bc" style="top:1132px"><b class="g">#define</b> <b class="n">RT_SFUD_SPI_MAX_HZ</b> <b class="r">50000000</b></div>
<div class="cl bc" style="top:1158px"><b class="n">#endif</b></div>
<div class="cl bc" style="top:1184px"></div>
<div class="cl bc" style="top:1210px"><b class="p">/* read the JEDEC SFDP command must run at 50 MHz or less */</b></div>
<div class="cl bc" style="top:1236px"><b class="g">#define</b> <b class="hl">RT_SFUD_DEFAULT_SPI_CFG</b>                  <b class="g">\</b></div>
<div class="cl bc" style="top:1262px"><b class="p">{</b>                                                <b class="g">\</b></div>
<div class="cl bc" style="top:1288px">    <b class="g">.</b><b class="k">mode</b> <b class="g">=</b> <b class="r">RT_SPI_MODE_0</b> <b class="g">|</b> <b class="r">RT_SPI_MSB</b><b class="p">,</b>          <b class="g">\</b></div>
<div class="cl bc" style="top:1314px">    <b class="g">.</b><b class="k">data_width</b> <b class="g">=</b> <b class="r">8</b><b class="p">,</b>                             <b class="g">\</b></div>
<div class="cl bc" style="top:1340px">    <b class="g">.</b><b class="k">max_hz</b> <b class="g">=</b> <b class="r">RT_SFUD_SPI_MAX_HZ</b><b class="p">,</b>                <b class="g">\</b></div>
<div class="cl bc" style="top:1366px"><b class="p">}</b></div>
<div class="cl bc" style="top:1392px"><b class="n">#endif</b> <b class="p">/* RT_SFUD_DEFAULT_SPI_CFG */</b></div>
<div class="cl bc" style="top:1418px"></div>
<div class="cl bc" style="top:1444px"><b class="n">#ifdef</b> <b class="r">SFUD_USING_QSPI</b></div>
<div class="cl bc" style="top:1470px"><b class="g">#define</b> <b class="n">RT_SFUD_DEFAULT_QSPI_CFG</b>                 <b class="g">\</b></div>
<div class="cl bc" style="top:1496px"><b class="p">{</b>                                                <b class="g">\</b></div>
<div class="cl bc" style="top:1522px">    <b class="r">RT_SFUD_DEFAULT_SPI_CFG</b><b class="p">,</b>                     <b class="g">\</b></div>
<div class="cl bc" style="top:1548px">    <b class="g">.</b><b class="k">medium_size</b> <b class="g">=</b> <b class="r">0x800000</b><b class="p">,</b>                     <b class="g">\</b></div>
</div></div>
<div id="bbot" class="a"></div>

<div class="redbox" style="left:1792px;top:2px;width:416px;height:74px"></div>
<div class="redbox" style="left:606px;top:124px;width:840px;height:306px"></div>
<div class="redbox" style="left:664px;top:556px;width:414px;height:111px"></div>
</body></html>
